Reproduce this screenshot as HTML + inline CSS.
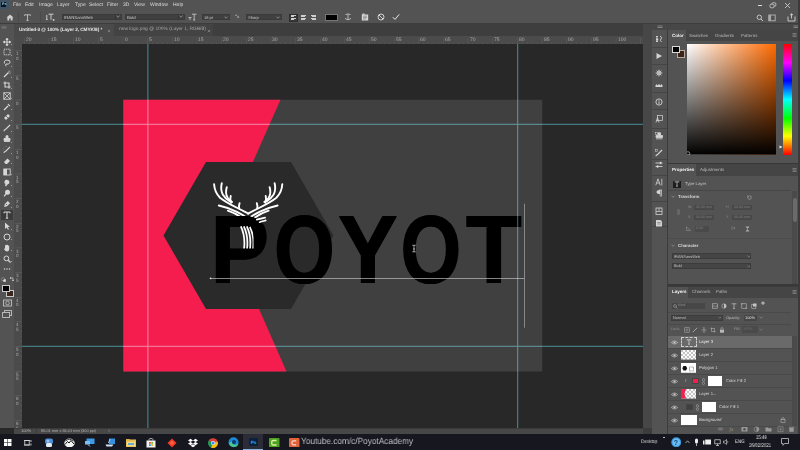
<!DOCTYPE html><html><head><meta charset="utf-8"><style>
*{margin:0;padding:0;box-sizing:border-box}
html,body{width:800px;height:450px;overflow:hidden;background:#282828;font-family:"Liberation Sans",sans-serif;text-rendering:geometricPrecision}
.a{position:absolute}
.t{position:absolute;color:#d0d0d0;white-space:nowrap;line-height:1;will-change:transform}
</style></head><body>
<div class="a" style="left:0px;top:0px;width:800px;height:10px;background:#535353;"></div>
<div class="a" style="left:0px;top:9.5px;width:800px;height:0.8px;background:#474747;"></div>
<div class="a" style="left:0px;top:10px;width:800px;height:14px;background:#535353;"></div>
<div class="a" style="left:0px;top:23.2px;width:800px;height:0.8px;background:#3d3d3d;"></div>
<div class="a" style="left:0px;top:24px;width:14px;height:404px;background:#535353;"></div>
<div class="a" style="left:13.6px;top:24px;width:1px;height:410px;background:#3c3c3c;"></div>
<div class="a" style="left:14px;top:24px;width:629px;height:12px;background:#3e3e3e;"></div>
<div class="a" style="left:14px;top:24px;width:100px;height:12px;background:#4a4a4a;"></div>
<div class="a" style="left:114px;top:24px;width:99px;height:12px;background:#434343;"></div>
<div class="a" style="left:14px;top:36px;width:629px;height:8px;background:#4b4b4b;"></div>
<div class="a" style="left:14px;top:36px;width:8px;height:392px;background:#4b4b4b;"></div>
<div class="a" style="left:0px;top:0px;width:8.5px;height:9px;background:#3f5566;"></div>
<div class="a" style="left:1px;top:2px;width:5.2px;height:5.2px;background:#08141f;"></div>
<div class="t" style="left:1.6px;top:2.8px;font-size:3.6px;color:#9fd4f5;font-weight:bold">Ps</div>
<div class="t" style="left:12.5px;top:2.9px;font-size:5.0px;color:#dedede;">File</div>
<div class="t" style="left:25px;top:2.9px;font-size:5.0px;color:#dedede;">Edit</div>
<div class="t" style="left:38.7px;top:2.9px;font-size:5.0px;color:#dedede;">Image</div>
<div class="t" style="left:57px;top:2.9px;font-size:5.0px;color:#dedede;">Layer</div>
<div class="t" style="left:74.5px;top:2.9px;font-size:5.0px;color:#dedede;">Type</div>
<div class="t" style="left:88.7px;top:2.9px;font-size:5.0px;color:#dedede;">Select</div>
<div class="t" style="left:107px;top:2.9px;font-size:5.0px;color:#dedede;">Filter</div>
<div class="t" style="left:123px;top:2.9px;font-size:5.0px;color:#dedede;">3D</div>
<div class="t" style="left:133.7px;top:2.9px;font-size:5.0px;color:#dedede;">View</div>
<div class="t" style="left:149.5px;top:2.9px;font-size:5.0px;color:#dedede;">Window</div>
<div class="t" style="left:172.5px;top:2.9px;font-size:5.0px;color:#dedede;">Help</div>
<div class="a" style="left:17.5px;top:12px;width:0.6px;height:10px;background:#4a4a4a;"></div>
<div class="a" style="left:40px;top:12px;width:0.6px;height:10px;background:#4a4a4a;"></div>
<svg class="a" style="left:6px;top:13.5px" width="8" height="7" viewBox="0 0 8 7"><path d="M0.5 3.6 L4 0.5 L7.5 3.6 L6.6 3.6 L6.6 6.6 L4.8 6.6 L4.8 4.6 L3.2 4.6 L3.2 6.6 L1.4 6.6 L1.4 3.6 Z" fill="#cfcfcf"/></svg>
<svg class="a" style="left:24px;top:13.5px" width="7" height="7" viewBox="0 0 7 7"><path d="M0.6 0.8 H6.4 M3.5 0.8 V6.4 M2.4 6.4 H4.6 M0.6 0.8 V1.8 M6.4 0.8 V1.8" stroke="#cfcfcf" stroke-width="0.8" fill="none"/></svg>
<svg class="a" style="left:45.5px;top:13px" width="9" height="8" viewBox="0 0 9 8"><path d="M2.5 1.2 H7.5 M5 1.2 V6.8 M0.8 2 V6.8 M0 6 L0.8 6.8 L1.6 6" stroke="#d8d8d8" stroke-width="0.9" fill="none"/><circle cx="7.6" cy="6.9" r="0.9" fill="#d8d8d8"/></svg>
<div class="a" style="left:61.6px;top:13.9px;width:60.8px;height:6.2px;background:#404040;border:0.5px solid #3a3a3a"></div>
<div class="t" style="left:63.6px;top:15.6px;font-size:4.3px;color:#c8c8c8;">IRANSansWeb</div>
<svg class="a" style="left:116.4px;top:15.4px" width="4" height="3" viewBox="0 0 4 3"><path d="M0.5 0.8 L2 2.2 L3.5 0.8" stroke="#bbb" stroke-width="0.6" fill="none"/></svg>
<div class="a" style="left:114.5px;top:14.2px;width:0.5px;height:5.6px;background:#353535;"></div>
<div class="a" style="left:125px;top:13.9px;width:59.5px;height:6.2px;background:#404040;border:0.5px solid #3a3a3a"></div>
<div class="t" style="left:127px;top:15.6px;font-size:4.3px;color:#c8c8c8;">Bold</div>
<svg class="a" style="left:178.5px;top:15.4px" width="4" height="3" viewBox="0 0 4 3"><path d="M0.5 0.8 L2 2.2 L3.5 0.8" stroke="#bbb" stroke-width="0.6" fill="none"/></svg>
<div class="a" style="left:177.5px;top:14.2px;width:0.5px;height:5.6px;background:#353535;"></div>
<svg class="a" style="left:188px;top:13px" width="9" height="8" viewBox="0 0 9 8"><path d="M4 1.2 H8.5 M6.2 1.2 V7 M5.2 7 H7.2 M0.5 4.5 H3.5 M2 4.5 V7" stroke="#d0d0d0" stroke-width="0.8" fill="none"/></svg>
<div class="a" style="left:201.6px;top:14.2px;width:28.7px;height:6.2px;background:#404040;border:0.5px solid #3a3a3a"></div>
<div class="t" style="left:203.6px;top:15.899999999999999px;font-size:4.0px;color:#c8c8c8;">18 pt</div>
<svg class="a" style="left:224.29999999999998px;top:15.7px" width="4" height="3" viewBox="0 0 4 3"><path d="M0.5 0.8 L2 2.2 L3.5 0.8" stroke="#bbb" stroke-width="0.6" fill="none"/></svg>
<div class="t" style="left:235px;top:14.4px;font-size:4.2px;color:#b8b8b8;"><sup>a</sup>a</div>
<div class="a" style="left:246px;top:14.2px;width:36px;height:6.2px;background:#404040;border:0.5px solid #3a3a3a"></div>
<div class="t" style="left:248px;top:15.899999999999999px;font-size:4.0px;color:#c8c8c8;">Sharp</div>
<svg class="a" style="left:276px;top:15.7px" width="4" height="3" viewBox="0 0 4 3"><path d="M0.5 0.8 L2 2.2 L3.5 0.8" stroke="#bbb" stroke-width="0.6" fill="none"/></svg>
<div class="a" style="left:288.5px;top:13.5px;width:9px;height:8px;background:#3a3a3a;border:0.5px solid #2e2e2e"></div>
<div class="a" style="left:290.5px;top:15.0px;width:5px;height:0.7px;background:#cfcfcf;"></div>
<div class="a" style="left:290.5px;top:16.35px;width:3.5px;height:0.7px;background:#cfcfcf;"></div>
<div class="a" style="left:290.5px;top:17.7px;width:5px;height:0.7px;background:#cfcfcf;"></div>
<div class="a" style="left:290.5px;top:19.05px;width:3.5px;height:0.7px;background:#cfcfcf;"></div>
<div class="a" style="left:300.5px;top:15.0px;width:5px;height:0.7px;background:#cfcfcf;"></div>
<div class="a" style="left:301.25px;top:16.35px;width:3.5px;height:0.7px;background:#cfcfcf;"></div>
<div class="a" style="left:300.5px;top:17.7px;width:5px;height:0.7px;background:#cfcfcf;"></div>
<div class="a" style="left:301.25px;top:19.05px;width:3.5px;height:0.7px;background:#cfcfcf;"></div>
<div class="a" style="left:310.5px;top:15.0px;width:5px;height:0.7px;background:#cfcfcf;"></div>
<div class="a" style="left:312.0px;top:16.35px;width:3.5px;height:0.7px;background:#cfcfcf;"></div>
<div class="a" style="left:310.5px;top:17.7px;width:5px;height:0.7px;background:#cfcfcf;"></div>
<div class="a" style="left:312.0px;top:19.05px;width:3.5px;height:0.7px;background:#cfcfcf;"></div>
<div class="a" style="left:325px;top:13.8px;width:12.5px;height:7.2px;background:#000;border:0.6px solid #777"></div>
<svg class="a" style="left:344px;top:13px" width="8" height="8" viewBox="0 0 8 8"><path d="M1.5 1.5 Q4 0.5 6.5 1.5 M4 1.3 V6.8 M1 5.5 Q4 8 7 5.5" stroke="#d0d0d0" stroke-width="0.8" fill="none"/></svg>
<svg class="a" style="left:361px;top:13px" width="8" height="8" viewBox="0 0 8 8"><rect x="0.8" y="1.5" width="6.4" height="6" fill="#d8d8d8"/><rect x="1.5" y="0.5" width="2" height="1.5" fill="#d8d8d8"/><path d="M2 3.2 H6 M2 4.6 H6 M2 6 H5" stroke="#555" stroke-width="0.5"/></svg>
<svg class="a" style="left:377px;top:13px" width="8" height="8" viewBox="0 0 8 8"><circle cx="4" cy="4" r="3" stroke="#e0e0e0" stroke-width="0.9" fill="none"/><path d="M2 2 L6 6" stroke="#e0e0e0" stroke-width="0.9"/></svg>
<svg class="a" style="left:392px;top:13px" width="8" height="8" viewBox="0 0 8 8"><path d="M0.8 4.2 L3 6.4 L7.2 1.4" stroke="#e8e8e8" stroke-width="1" fill="none"/></svg>
<svg class="a" style="left:755.5px;top:13.5px" width="8" height="8" viewBox="0 0 8 8"><circle cx="3.3" cy="3.3" r="2.2" stroke="#cfcfcf" stroke-width="0.9" fill="none"/><path d="M5 5 L7 7" stroke="#cfcfcf" stroke-width="1"/></svg>
<svg class="a" style="left:768px;top:13.5px" width="8" height="8" viewBox="0 0 8 8"><rect x="0.8" y="1" width="6.4" height="5.8" stroke="#c0c0c0" stroke-width="0.8" fill="none"/><rect x="0.8" y="1" width="2.2" height="5.8" fill="#aaa"/></svg>
<svg class="a" style="left:786.5px;top:13px" width="9" height="9" viewBox="0 0 9 9"><path d="M1 3.5 V8 H8 V3.5 M4.5 0.8 V5.5 M3 2.2 L4.5 0.8 L6 2.2" stroke="#cfcfcf" stroke-width="0.9" fill="none"/></svg>
<div class="a" style="left:757.5px;top:4.8px;width:4.8px;height:0.9px;background:#d8d8d8;"></div>
<svg class="a" style="left:768.5px;top:2px" width="8" height="7" viewBox="0 0 8 7"><rect x="1" y="2.2" width="4" height="3.6" rx="1.2" stroke="#d0d0d0" stroke-width="0.8" fill="none"/><path d="M3 2.2 V1.5 Q3 0.8 3.8 0.8 H6 Q6.8 0.8 6.8 1.6 V3.4 Q6.8 4.2 6 4.2 H5" stroke="#d0d0d0" stroke-width="0.8" fill="none"/></svg>
<svg class="a" style="left:783.5px;top:1.5px" width="7" height="7" viewBox="0 0 7 7"><path d="M1 1 L6 6 M6 1 L1 6" stroke="#d8d8d8" stroke-width="0.8"/></svg>
<div class="t" style="left:19px;top:28.2px;font-size:4.7px;color:#e8e8e8;font-weight:bold;letter-spacing:-0.05px">Untitled-3 @ 100% (Layer 2, CMYK/8) *</div>
<svg class="a" style="left:106.5px;top:29px" width="4" height="4" viewBox="0 0 4 4"><path d="M0.8 0.8 L3.2 3.2 M3.2 0.8 L0.8 3.2" stroke="#999" stroke-width="0.6"/></svg>
<div class="t" style="left:119px;top:28.2px;font-size:4.85px;color:#a8a8a8;">new logo.png @ 100% (Layer 1, RGB/8)</div>
<svg class="a" style="left:207px;top:29px" width="4" height="4" viewBox="0 0 4 4"><path d="M0.8 0.8 L3.2 3.2 M3.2 0.8 L0.8 3.2" stroke="#999" stroke-width="0.6"/></svg>
<svg class="a" style="left:0;top:0" width="800" height="450"><rect x="24.15" y="38" width="0.5" height="6" fill="#5e5e5e"/><rect x="29.08" y="42.5" width="0.5" height="1.5" fill="#606060"/><rect x="34.01" y="42.5" width="0.5" height="1.5" fill="#606060"/><rect x="38.94" y="42.5" width="0.5" height="1.5" fill="#606060"/><rect x="43.87" y="42.5" width="0.5" height="1.5" fill="#606060"/><rect x="48.80" y="38" width="0.5" height="6" fill="#5e5e5e"/><rect x="53.73" y="42.5" width="0.5" height="1.5" fill="#606060"/><rect x="58.66" y="42.5" width="0.5" height="1.5" fill="#606060"/><rect x="63.59" y="42.5" width="0.5" height="1.5" fill="#606060"/><rect x="68.52" y="42.5" width="0.5" height="1.5" fill="#606060"/><rect x="73.45" y="38" width="0.5" height="6" fill="#5e5e5e"/><rect x="78.38" y="42.5" width="0.5" height="1.5" fill="#606060"/><rect x="83.31" y="42.5" width="0.5" height="1.5" fill="#606060"/><rect x="88.24" y="42.5" width="0.5" height="1.5" fill="#606060"/><rect x="93.17" y="42.5" width="0.5" height="1.5" fill="#606060"/><rect x="98.10" y="38" width="0.5" height="6" fill="#5e5e5e"/><rect x="103.03" y="42.5" width="0.5" height="1.5" fill="#606060"/><rect x="107.96" y="42.5" width="0.5" height="1.5" fill="#606060"/><rect x="112.89" y="42.5" width="0.5" height="1.5" fill="#606060"/><rect x="117.82" y="42.5" width="0.5" height="1.5" fill="#606060"/><rect x="122.75" y="38" width="0.5" height="6" fill="#5e5e5e"/><rect x="127.68" y="42.5" width="0.5" height="1.5" fill="#606060"/><rect x="132.61" y="42.5" width="0.5" height="1.5" fill="#606060"/><rect x="137.54" y="42.5" width="0.5" height="1.5" fill="#606060"/><rect x="142.47" y="42.5" width="0.5" height="1.5" fill="#606060"/><rect x="147.40" y="38" width="0.5" height="6" fill="#5e5e5e"/><rect x="152.33" y="42.5" width="0.5" height="1.5" fill="#606060"/><rect x="157.26" y="42.5" width="0.5" height="1.5" fill="#606060"/><rect x="162.19" y="42.5" width="0.5" height="1.5" fill="#606060"/><rect x="167.12" y="42.5" width="0.5" height="1.5" fill="#606060"/><rect x="172.05" y="38" width="0.5" height="6" fill="#5e5e5e"/><rect x="176.98" y="42.5" width="0.5" height="1.5" fill="#606060"/><rect x="181.91" y="42.5" width="0.5" height="1.5" fill="#606060"/><rect x="186.84" y="42.5" width="0.5" height="1.5" fill="#606060"/><rect x="191.77" y="42.5" width="0.5" height="1.5" fill="#606060"/><rect x="196.70" y="38" width="0.5" height="6" fill="#5e5e5e"/><rect x="201.63" y="42.5" width="0.5" height="1.5" fill="#606060"/><rect x="206.56" y="42.5" width="0.5" height="1.5" fill="#606060"/><rect x="211.49" y="42.5" width="0.5" height="1.5" fill="#606060"/><rect x="216.42" y="42.5" width="0.5" height="1.5" fill="#606060"/><rect x="221.35" y="38" width="0.5" height="6" fill="#5e5e5e"/><rect x="226.28" y="42.5" width="0.5" height="1.5" fill="#606060"/><rect x="231.21" y="42.5" width="0.5" height="1.5" fill="#606060"/><rect x="236.14" y="42.5" width="0.5" height="1.5" fill="#606060"/><rect x="241.07" y="42.5" width="0.5" height="1.5" fill="#606060"/><rect x="246.00" y="38" width="0.5" height="6" fill="#5e5e5e"/><rect x="250.93" y="42.5" width="0.5" height="1.5" fill="#606060"/><rect x="255.86" y="42.5" width="0.5" height="1.5" fill="#606060"/><rect x="260.79" y="42.5" width="0.5" height="1.5" fill="#606060"/><rect x="265.72" y="42.5" width="0.5" height="1.5" fill="#606060"/><rect x="270.65" y="38" width="0.5" height="6" fill="#5e5e5e"/><rect x="275.58" y="42.5" width="0.5" height="1.5" fill="#606060"/><rect x="280.51" y="42.5" width="0.5" height="1.5" fill="#606060"/><rect x="285.44" y="42.5" width="0.5" height="1.5" fill="#606060"/><rect x="290.37" y="42.5" width="0.5" height="1.5" fill="#606060"/><rect x="295.30" y="38" width="0.5" height="6" fill="#5e5e5e"/><rect x="300.23" y="42.5" width="0.5" height="1.5" fill="#606060"/><rect x="305.16" y="42.5" width="0.5" height="1.5" fill="#606060"/><rect x="310.09" y="42.5" width="0.5" height="1.5" fill="#606060"/><rect x="315.02" y="42.5" width="0.5" height="1.5" fill="#606060"/><rect x="319.95" y="38" width="0.5" height="6" fill="#5e5e5e"/><rect x="324.88" y="42.5" width="0.5" height="1.5" fill="#606060"/><rect x="329.81" y="42.5" width="0.5" height="1.5" fill="#606060"/><rect x="334.74" y="42.5" width="0.5" height="1.5" fill="#606060"/><rect x="339.67" y="42.5" width="0.5" height="1.5" fill="#606060"/><rect x="344.60" y="38" width="0.5" height="6" fill="#5e5e5e"/><rect x="349.53" y="42.5" width="0.5" height="1.5" fill="#606060"/><rect x="354.46" y="42.5" width="0.5" height="1.5" fill="#606060"/><rect x="359.39" y="42.5" width="0.5" height="1.5" fill="#606060"/><rect x="364.32" y="42.5" width="0.5" height="1.5" fill="#606060"/><rect x="369.25" y="38" width="0.5" height="6" fill="#5e5e5e"/><rect x="374.18" y="42.5" width="0.5" height="1.5" fill="#606060"/><rect x="379.11" y="42.5" width="0.5" height="1.5" fill="#606060"/><rect x="384.04" y="42.5" width="0.5" height="1.5" fill="#606060"/><rect x="388.97" y="42.5" width="0.5" height="1.5" fill="#606060"/><rect x="393.90" y="38" width="0.5" height="6" fill="#5e5e5e"/><rect x="398.83" y="42.5" width="0.5" height="1.5" fill="#606060"/><rect x="403.76" y="42.5" width="0.5" height="1.5" fill="#606060"/><rect x="408.69" y="42.5" width="0.5" height="1.5" fill="#606060"/><rect x="413.62" y="42.5" width="0.5" height="1.5" fill="#606060"/><rect x="418.55" y="38" width="0.5" height="6" fill="#5e5e5e"/><rect x="423.48" y="42.5" width="0.5" height="1.5" fill="#606060"/><rect x="428.41" y="42.5" width="0.5" height="1.5" fill="#606060"/><rect x="433.34" y="42.5" width="0.5" height="1.5" fill="#606060"/><rect x="438.27" y="42.5" width="0.5" height="1.5" fill="#606060"/><rect x="443.20" y="38" width="0.5" height="6" fill="#5e5e5e"/><rect x="448.13" y="42.5" width="0.5" height="1.5" fill="#606060"/><rect x="453.06" y="42.5" width="0.5" height="1.5" fill="#606060"/><rect x="457.99" y="42.5" width="0.5" height="1.5" fill="#606060"/><rect x="462.92" y="42.5" width="0.5" height="1.5" fill="#606060"/><rect x="467.85" y="38" width="0.5" height="6" fill="#5e5e5e"/><rect x="472.78" y="42.5" width="0.5" height="1.5" fill="#606060"/><rect x="477.71" y="42.5" width="0.5" height="1.5" fill="#606060"/><rect x="482.64" y="42.5" width="0.5" height="1.5" fill="#606060"/><rect x="487.57" y="42.5" width="0.5" height="1.5" fill="#606060"/><rect x="492.50" y="38" width="0.5" height="6" fill="#5e5e5e"/><rect x="497.43" y="42.5" width="0.5" height="1.5" fill="#606060"/><rect x="502.36" y="42.5" width="0.5" height="1.5" fill="#606060"/><rect x="507.29" y="42.5" width="0.5" height="1.5" fill="#606060"/><rect x="512.22" y="42.5" width="0.5" height="1.5" fill="#606060"/><rect x="517.15" y="38" width="0.5" height="6" fill="#5e5e5e"/><rect x="522.08" y="42.5" width="0.5" height="1.5" fill="#606060"/><rect x="527.01" y="42.5" width="0.5" height="1.5" fill="#606060"/><rect x="531.94" y="42.5" width="0.5" height="1.5" fill="#606060"/><rect x="536.87" y="42.5" width="0.5" height="1.5" fill="#606060"/><rect x="541.80" y="38" width="0.5" height="6" fill="#5e5e5e"/><rect x="546.73" y="42.5" width="0.5" height="1.5" fill="#606060"/><rect x="551.66" y="42.5" width="0.5" height="1.5" fill="#606060"/><rect x="556.59" y="42.5" width="0.5" height="1.5" fill="#606060"/><rect x="561.52" y="42.5" width="0.5" height="1.5" fill="#606060"/><rect x="566.45" y="38" width="0.5" height="6" fill="#5e5e5e"/><rect x="571.38" y="42.5" width="0.5" height="1.5" fill="#606060"/><rect x="576.31" y="42.5" width="0.5" height="1.5" fill="#606060"/><rect x="581.24" y="42.5" width="0.5" height="1.5" fill="#606060"/><rect x="586.17" y="42.5" width="0.5" height="1.5" fill="#606060"/><rect x="591.10" y="38" width="0.5" height="6" fill="#5e5e5e"/><rect x="596.03" y="42.5" width="0.5" height="1.5" fill="#606060"/><rect x="600.96" y="42.5" width="0.5" height="1.5" fill="#606060"/><rect x="605.89" y="42.5" width="0.5" height="1.5" fill="#606060"/><rect x="610.82" y="42.5" width="0.5" height="1.5" fill="#606060"/><rect x="615.75" y="38" width="0.5" height="6" fill="#5e5e5e"/><rect x="620.68" y="42.5" width="0.5" height="1.5" fill="#606060"/><rect x="625.61" y="42.5" width="0.5" height="1.5" fill="#606060"/><rect x="630.54" y="42.5" width="0.5" height="1.5" fill="#606060"/><rect x="635.47" y="42.5" width="0.5" height="1.5" fill="#606060"/><rect x="640.40" y="38" width="0.5" height="6" fill="#5e5e5e"/></svg>
<div class="t" style="left:25.900000000000006px;top:38.2px;font-size:5.0px;color:#aaaaaa;">20</div>
<div class="t" style="left:50.55000000000001px;top:38.2px;font-size:5.0px;color:#aaaaaa;">15</div>
<div class="t" style="left:75.2px;top:38.2px;font-size:5.0px;color:#aaaaaa;">10</div>
<div class="t" style="left:99.85px;top:38.2px;font-size:5.0px;color:#aaaaaa;">5</div>
<div class="t" style="left:124.5px;top:38.2px;font-size:5.0px;color:#aaaaaa;">0</div>
<div class="t" style="left:149.15px;top:38.2px;font-size:5.0px;color:#aaaaaa;">5</div>
<div class="t" style="left:173.8px;top:38.2px;font-size:5.0px;color:#aaaaaa;">10</div>
<div class="t" style="left:198.45px;top:38.2px;font-size:5.0px;color:#aaaaaa;">15</div>
<div class="t" style="left:223.1px;top:38.2px;font-size:5.0px;color:#aaaaaa;">20</div>
<div class="t" style="left:247.75px;top:38.2px;font-size:5.0px;color:#aaaaaa;">25</div>
<div class="t" style="left:272.4px;top:38.2px;font-size:5.0px;color:#aaaaaa;">30</div>
<div class="t" style="left:297.04999999999995px;top:38.2px;font-size:5.0px;color:#aaaaaa;">35</div>
<div class="t" style="left:321.7px;top:38.2px;font-size:5.0px;color:#aaaaaa;">40</div>
<div class="t" style="left:346.35px;top:38.2px;font-size:5.0px;color:#aaaaaa;">45</div>
<div class="t" style="left:371.0px;top:38.2px;font-size:5.0px;color:#aaaaaa;">50</div>
<div class="t" style="left:395.65px;top:38.2px;font-size:5.0px;color:#aaaaaa;">55</div>
<div class="t" style="left:420.29999999999995px;top:38.2px;font-size:5.0px;color:#aaaaaa;">60</div>
<div class="t" style="left:444.95px;top:38.2px;font-size:5.0px;color:#aaaaaa;">65</div>
<div class="t" style="left:469.59999999999997px;top:38.2px;font-size:5.0px;color:#aaaaaa;">70</div>
<div class="t" style="left:494.25px;top:38.2px;font-size:5.0px;color:#aaaaaa;">75</div>
<div class="t" style="left:518.9px;top:38.2px;font-size:5.0px;color:#aaaaaa;">80</div>
<div class="t" style="left:543.55px;top:38.2px;font-size:5.0px;color:#aaaaaa;">85</div>
<div class="t" style="left:568.2px;top:38.2px;font-size:5.0px;color:#aaaaaa;">90</div>
<div class="t" style="left:592.8499999999999px;top:38.2px;font-size:5.0px;color:#aaaaaa;">95</div>
<div class="t" style="left:617.5px;top:38.2px;font-size:5.0px;color:#aaaaaa;">100</div>
<svg class="a" style="left:0;top:0" width="800" height="450"><rect x="20.5" y="45.52" width="1.5" height="0.5" fill="#606060"/><rect x="15" y="50.45" width="7" height="0.5" fill="#666"/><rect x="20.5" y="55.38" width="1.5" height="0.5" fill="#606060"/><rect x="20.5" y="60.31" width="1.5" height="0.5" fill="#606060"/><rect x="20.5" y="65.24" width="1.5" height="0.5" fill="#606060"/><rect x="20.5" y="70.17" width="1.5" height="0.5" fill="#606060"/><rect x="15" y="75.10" width="7" height="0.5" fill="#666"/><rect x="20.5" y="80.03" width="1.5" height="0.5" fill="#606060"/><rect x="20.5" y="84.96" width="1.5" height="0.5" fill="#606060"/><rect x="20.5" y="89.89" width="1.5" height="0.5" fill="#606060"/><rect x="20.5" y="94.82" width="1.5" height="0.5" fill="#606060"/><rect x="15" y="99.75" width="7" height="0.5" fill="#666"/><rect x="20.5" y="104.68" width="1.5" height="0.5" fill="#606060"/><rect x="20.5" y="109.61" width="1.5" height="0.5" fill="#606060"/><rect x="20.5" y="114.54" width="1.5" height="0.5" fill="#606060"/><rect x="20.5" y="119.47" width="1.5" height="0.5" fill="#606060"/><rect x="15" y="124.40" width="7" height="0.5" fill="#666"/><rect x="20.5" y="129.33" width="1.5" height="0.5" fill="#606060"/><rect x="20.5" y="134.26" width="1.5" height="0.5" fill="#606060"/><rect x="20.5" y="139.19" width="1.5" height="0.5" fill="#606060"/><rect x="20.5" y="144.12" width="1.5" height="0.5" fill="#606060"/><rect x="15" y="149.05" width="7" height="0.5" fill="#666"/><rect x="20.5" y="153.98" width="1.5" height="0.5" fill="#606060"/><rect x="20.5" y="158.91" width="1.5" height="0.5" fill="#606060"/><rect x="20.5" y="163.84" width="1.5" height="0.5" fill="#606060"/><rect x="20.5" y="168.77" width="1.5" height="0.5" fill="#606060"/><rect x="15" y="173.70" width="7" height="0.5" fill="#666"/><rect x="20.5" y="178.63" width="1.5" height="0.5" fill="#606060"/><rect x="20.5" y="183.56" width="1.5" height="0.5" fill="#606060"/><rect x="20.5" y="188.49" width="1.5" height="0.5" fill="#606060"/><rect x="20.5" y="193.42" width="1.5" height="0.5" fill="#606060"/><rect x="15" y="198.35" width="7" height="0.5" fill="#666"/><rect x="20.5" y="203.28" width="1.5" height="0.5" fill="#606060"/><rect x="20.5" y="208.21" width="1.5" height="0.5" fill="#606060"/><rect x="20.5" y="213.14" width="1.5" height="0.5" fill="#606060"/><rect x="20.5" y="218.07" width="1.5" height="0.5" fill="#606060"/><rect x="15" y="223.00" width="7" height="0.5" fill="#666"/><rect x="20.5" y="227.93" width="1.5" height="0.5" fill="#606060"/><rect x="20.5" y="232.86" width="1.5" height="0.5" fill="#606060"/><rect x="20.5" y="237.79" width="1.5" height="0.5" fill="#606060"/><rect x="20.5" y="242.72" width="1.5" height="0.5" fill="#606060"/><rect x="15" y="247.65" width="7" height="0.5" fill="#666"/><rect x="20.5" y="252.58" width="1.5" height="0.5" fill="#606060"/><rect x="20.5" y="257.51" width="1.5" height="0.5" fill="#606060"/><rect x="20.5" y="262.44" width="1.5" height="0.5" fill="#606060"/><rect x="20.5" y="267.37" width="1.5" height="0.5" fill="#606060"/><rect x="15" y="272.30" width="7" height="0.5" fill="#666"/><rect x="20.5" y="277.23" width="1.5" height="0.5" fill="#606060"/><rect x="20.5" y="282.16" width="1.5" height="0.5" fill="#606060"/><rect x="20.5" y="287.09" width="1.5" height="0.5" fill="#606060"/><rect x="20.5" y="292.02" width="1.5" height="0.5" fill="#606060"/><rect x="15" y="296.95" width="7" height="0.5" fill="#666"/><rect x="20.5" y="301.88" width="1.5" height="0.5" fill="#606060"/><rect x="20.5" y="306.81" width="1.5" height="0.5" fill="#606060"/><rect x="20.5" y="311.74" width="1.5" height="0.5" fill="#606060"/><rect x="20.5" y="316.67" width="1.5" height="0.5" fill="#606060"/><rect x="15" y="321.60" width="7" height="0.5" fill="#666"/><rect x="20.5" y="326.53" width="1.5" height="0.5" fill="#606060"/><rect x="20.5" y="331.46" width="1.5" height="0.5" fill="#606060"/><rect x="20.5" y="336.39" width="1.5" height="0.5" fill="#606060"/><rect x="20.5" y="341.32" width="1.5" height="0.5" fill="#606060"/><rect x="15" y="346.25" width="7" height="0.5" fill="#666"/><rect x="20.5" y="351.18" width="1.5" height="0.5" fill="#606060"/><rect x="20.5" y="356.11" width="1.5" height="0.5" fill="#606060"/><rect x="20.5" y="361.04" width="1.5" height="0.5" fill="#606060"/><rect x="20.5" y="365.97" width="1.5" height="0.5" fill="#606060"/><rect x="15" y="370.90" width="7" height="0.5" fill="#666"/><rect x="20.5" y="375.83" width="1.5" height="0.5" fill="#606060"/><rect x="20.5" y="380.76" width="1.5" height="0.5" fill="#606060"/><rect x="20.5" y="385.69" width="1.5" height="0.5" fill="#606060"/><rect x="20.5" y="390.62" width="1.5" height="0.5" fill="#606060"/><rect x="15" y="395.55" width="7" height="0.5" fill="#666"/><rect x="20.5" y="400.48" width="1.5" height="0.5" fill="#606060"/><rect x="20.5" y="405.41" width="1.5" height="0.5" fill="#606060"/><rect x="20.5" y="410.34" width="1.5" height="0.5" fill="#606060"/><rect x="20.5" y="415.27" width="1.5" height="0.5" fill="#606060"/><rect x="15" y="420.20" width="7" height="0.5" fill="#666"/><rect x="20.5" y="425.13" width="1.5" height="0.5" fill="#606060"/></svg>
<div class="t" style="left:15.8px;top:52.300000000000004px;font-size:4.6px;color:#aaaaaa;">1</div>
<div class="t" style="left:15.8px;top:56.900000000000006px;font-size:4.6px;color:#aaaaaa;">0</div>
<div class="t" style="left:15.8px;top:76.94999999999999px;font-size:4.6px;color:#aaaaaa;">5</div>
<div class="t" style="left:15.8px;top:101.6px;font-size:4.6px;color:#aaaaaa;">0</div>
<div class="t" style="left:15.8px;top:126.25px;font-size:4.6px;color:#aaaaaa;">5</div>
<div class="t" style="left:15.8px;top:150.9px;font-size:4.6px;color:#aaaaaa;">1</div>
<div class="t" style="left:15.8px;top:155.5px;font-size:4.6px;color:#aaaaaa;">0</div>
<div class="t" style="left:15.8px;top:175.54999999999998px;font-size:4.6px;color:#aaaaaa;">1</div>
<div class="t" style="left:15.8px;top:180.14999999999998px;font-size:4.6px;color:#aaaaaa;">5</div>
<div class="t" style="left:15.8px;top:200.2px;font-size:4.6px;color:#aaaaaa;">2</div>
<div class="t" style="left:15.8px;top:204.79999999999998px;font-size:4.6px;color:#aaaaaa;">0</div>
<div class="t" style="left:15.8px;top:224.85px;font-size:4.6px;color:#aaaaaa;">2</div>
<div class="t" style="left:15.8px;top:229.45px;font-size:4.6px;color:#aaaaaa;">5</div>
<div class="t" style="left:15.8px;top:249.49999999999997px;font-size:4.6px;color:#aaaaaa;">3</div>
<div class="t" style="left:15.8px;top:254.09999999999997px;font-size:4.6px;color:#aaaaaa;">0</div>
<div class="t" style="left:15.8px;top:274.15px;font-size:4.6px;color:#aaaaaa;">3</div>
<div class="t" style="left:15.8px;top:278.75px;font-size:4.6px;color:#aaaaaa;">5</div>
<div class="t" style="left:15.8px;top:298.8px;font-size:4.6px;color:#aaaaaa;">4</div>
<div class="t" style="left:15.8px;top:303.40000000000003px;font-size:4.6px;color:#aaaaaa;">0</div>
<div class="t" style="left:15.8px;top:323.45000000000005px;font-size:4.6px;color:#aaaaaa;">4</div>
<div class="t" style="left:15.8px;top:328.05000000000007px;font-size:4.6px;color:#aaaaaa;">5</div>
<div class="t" style="left:15.8px;top:348.1px;font-size:4.6px;color:#aaaaaa;">5</div>
<div class="t" style="left:15.8px;top:352.70000000000005px;font-size:4.6px;color:#aaaaaa;">0</div>
<div class="t" style="left:15.8px;top:372.75px;font-size:4.6px;color:#aaaaaa;">5</div>
<div class="t" style="left:15.8px;top:377.35px;font-size:4.6px;color:#aaaaaa;">5</div>
<div class="t" style="left:15.8px;top:397.4px;font-size:4.6px;color:#aaaaaa;">6</div>
<div class="t" style="left:15.8px;top:402.0px;font-size:4.6px;color:#aaaaaa;">0</div>
<div class="t" style="left:15.8px;top:422.05px;font-size:4.6px;color:#aaaaaa;">6</div>
<div class="t" style="left:15.8px;top:426.65000000000003px;font-size:4.6px;color:#aaaaaa;">5</div>
<div class="a" style="left:0px;top:25.5px;width:14px;height:2.2px;background:#535353;"></div>
<svg class="a" style="left:1px;top:25.8px" width="6" height="3" viewBox="0 0 6 3"><path d="M0.5 0.8 H5.5 M0.5 2 H5.5" stroke="#999" stroke-width="0.5"/></svg>
<svg class="a" style="left:2.5px;top:37.50px" width="8" height="8" viewBox="0 0 8 8"><path d="M4 0.5 V7.5 M0.5 4 H7.5 M2.8 1.7 L4 0.5 L5.2 1.7 M2.8 6.3 L4 7.5 L5.2 6.3 M1.7 2.8 L0.5 4 L1.7 5.2 M6.3 2.8 L7.5 4 L6.3 5.2" stroke="#d6d6d6" stroke-width="1.1" fill="none"/></svg>
<div class="a" style="left:10.6px;top:44.1px;width:0.9px;height:0.9px;background:#9a9a9a;"></div>
<svg class="a" style="left:2.5px;top:48.35px" width="8" height="8" viewBox="0 0 8 8"><rect x="1" y="1.2" width="6" height="5.6" stroke="#d6d6d6" stroke-width="0.9" stroke-dasharray="1.3 0.8" fill="none"/></svg>
<div class="a" style="left:10.6px;top:54.95px;width:0.9px;height:0.9px;background:#9a9a9a;"></div>
<svg class="a" style="left:2.5px;top:59.20px" width="8" height="8" viewBox="0 0 8 8"><path d="M1.5 4.5 Q0.5 1.5 4 1 Q7.5 1 7 3.5 Q6 6 3 5 M3 5 Q2 6.5 3.2 7.3" stroke="#d6d6d6" stroke-width="1" fill="none"/></svg>
<div class="a" style="left:10.6px;top:65.8px;width:0.9px;height:0.9px;background:#9a9a9a;"></div>
<svg class="a" style="left:2.5px;top:70.05px" width="8" height="8" viewBox="0 0 8 8"><path d="M1 7 L5.5 2.5" stroke="#d6d6d6" stroke-width="1.3"/><path d="M6 0.5 V2 M7.5 2 H6.2 M6.5 3 L7.3 3.8" stroke="#d6d6d6" stroke-width="0.6"/></svg>
<div class="a" style="left:10.6px;top:76.64999999999999px;width:0.9px;height:0.9px;background:#9a9a9a;"></div>
<svg class="a" style="left:2.5px;top:80.90px" width="8" height="8" viewBox="0 0 8 8"><path d="M2 0.5 V6 H7.5 M0.5 2 H6 V7.5" stroke="#d6d6d6" stroke-width="1.1" fill="none"/></svg>
<div class="a" style="left:10.6px;top:87.5px;width:0.9px;height:0.9px;background:#9a9a9a;"></div>
<svg class="a" style="left:2.5px;top:91.75px" width="8" height="8" viewBox="0 0 8 8"><rect x="0.8" y="0.8" width="6.4" height="6.4" stroke="#d6d6d6" stroke-width="0.9" fill="none"/><path d="M0.8 0.8 L7.2 7.2 M7.2 0.8 L0.8 7.2" stroke="#d6d6d6" stroke-width="0.8"/></svg>
<div class="a" style="left:10.6px;top:98.35px;width:0.9px;height:0.9px;background:#9a9a9a;"></div>
<svg class="a" style="left:2.5px;top:102.60px" width="8" height="8" viewBox="0 0 8 8"><path d="M1 7 L5 3" stroke="#d6d6d6" stroke-width="1.2"/><path d="M4.5 1.5 L6.5 3.5 L7.3 2.7 L5.3 0.7 Z" fill="#d6d6d6"/></svg>
<div class="a" style="left:10.6px;top:109.19999999999999px;width:0.9px;height:0.9px;background:#9a9a9a;"></div>
<svg class="a" style="left:2.5px;top:113.45px" width="8" height="8" viewBox="0 0 8 8"><path d="M1 5 L5 1 L7 3 L3 7 Z" fill="#d6d6d6"/><path d="M3 3 L5 5" stroke="#535353" stroke-width="0.8"/></svg>
<div class="a" style="left:10.6px;top:120.05px;width:0.9px;height:0.9px;background:#9a9a9a;"></div>
<svg class="a" style="left:2.5px;top:124.30px" width="8" height="8" viewBox="0 0 8 8"><path d="M1 7.2 Q1 5.5 2.5 5.5 L7 1" stroke="#d6d6d6" stroke-width="1.2" fill="none"/></svg>
<div class="a" style="left:10.6px;top:130.9px;width:0.9px;height:0.9px;background:#9a9a9a;"></div>
<svg class="a" style="left:2.5px;top:135.15px" width="8" height="8" viewBox="0 0 8 8"><path d="M3 0.8 H5 V3.5 H7 V5.5 H1 V3.5 H3 Z M1 6.5 H7" stroke="#d6d6d6" stroke-width="0.9" fill="#d6d6d6"/></svg>
<div class="a" style="left:10.6px;top:141.74999999999997px;width:0.9px;height:0.9px;background:#9a9a9a;"></div>
<svg class="a" style="left:2.5px;top:146.00px" width="8" height="8" viewBox="0 0 8 8"><path d="M1 7 Q1 5.5 2.5 5.5 L7 1" stroke="#d6d6d6" stroke-width="1.1" fill="none"/><path d="M0.5 3 A2.2 2.2 0 1 1 3 0.6" stroke="#d6d6d6" stroke-width="0.7" fill="none"/></svg>
<div class="a" style="left:10.6px;top:152.6px;width:0.9px;height:0.9px;background:#9a9a9a;"></div>
<svg class="a" style="left:2.5px;top:156.85px" width="8" height="8" viewBox="0 0 8 8"><path d="M1 5 L4.5 1.5 L7 4 L4 7 H2.5 Z" fill="#d6d6d6"/></svg>
<div class="a" style="left:10.6px;top:163.45px;width:0.9px;height:0.9px;background:#9a9a9a;"></div>
<svg class="a" style="left:2.5px;top:167.70px" width="8" height="8" viewBox="0 0 8 8"><rect x="0.8" y="1" width="6.4" height="6" stroke="#d6d6d6" stroke-width="0.9" fill="none"/><rect x="0.8" y="1" width="3.2" height="6" fill="#d6d6d6"/></svg>
<div class="a" style="left:10.6px;top:174.29999999999998px;width:0.9px;height:0.9px;background:#9a9a9a;"></div>
<svg class="a" style="left:2.5px;top:178.55px" width="8" height="8" viewBox="0 0 8 8"><path d="M3 0.8 Q6 0.5 6.5 3 Q6.5 5 4.5 5.5 L3 7.5 L2 6.5 L2.5 5 Q0.8 4 1.5 2.5 Q2 1 3 0.8 Z" fill="#d6d6d6"/></svg>
<div class="a" style="left:10.6px;top:185.14999999999998px;width:0.9px;height:0.9px;background:#9a9a9a;"></div>
<svg class="a" style="left:2.5px;top:189.40px" width="8" height="8" viewBox="0 0 8 8"><circle cx="4.5" cy="3.2" r="2.5" fill="#d6d6d6"/><path d="M3 5 L1 7.3" stroke="#d6d6d6" stroke-width="1.2"/></svg>
<div class="a" style="left:10.6px;top:196.0px;width:0.9px;height:0.9px;background:#9a9a9a;"></div>
<svg class="a" style="left:2.5px;top:200.25px" width="8" height="8" viewBox="0 0 8 8"><path d="M1.2 7 L1.8 4 L4.8 1 L7 3.2 L4 6.2 Z" fill="#d6d6d6"/><circle cx="3.5" cy="4.5" r="0.6" fill="#535353"/></svg>
<div class="a" style="left:10.6px;top:206.85px;width:0.9px;height:0.9px;background:#9a9a9a;"></div>
<div class="a" style="left:1px;top:209.79999999999998px;width:12px;height:10.6px;background:#3b3b3b;"></div>
<svg class="a" style="left:2.5px;top:211.10px" width="8" height="8" viewBox="0 0 8 8"><path d="M1 1 H7 M4 1 V7.2 M2.8 7.2 H5.2 M1 1 V2.3 M7 1 V2.3" stroke="#d6d6d6" stroke-width="1.1" fill="none"/></svg>
<svg class="a" style="left:2.5px;top:221.95px" width="8" height="8" viewBox="0 0 8 8"><path d="M2 0.5 L2 7 L3.6 5.4 L5 7.8 L6 7.3 L4.8 5 L7 5 Z" fill="#d6d6d6"/></svg>
<div class="a" style="left:10.6px;top:228.54999999999998px;width:0.9px;height:0.9px;background:#9a9a9a;"></div>
<svg class="a" style="left:2.5px;top:232.80px" width="8" height="8" viewBox="0 0 8 8"><circle cx="4" cy="4" r="3" stroke="#d6d6d6" stroke-width="1" fill="none"/></svg>
<div class="a" style="left:10.6px;top:239.39999999999998px;width:0.9px;height:0.9px;background:#9a9a9a;"></div>
<svg class="a" style="left:2.5px;top:243.65px" width="8" height="8" viewBox="0 0 8 8"><path d="M2 4.5 V2 Q2 1.3 2.6 1.3 V3.5 V1 Q3.2 0.3 3.8 1 V3.3 V1 Q4.4 0.4 5 1 V3.5 V1.8 Q5.6 1.2 6.2 1.8 V5 Q6.2 7.5 4 7.5 Q2.5 7.5 1.2 5.5 Q0.8 4.8 1.5 4.5 Z" fill="#d6d6d6"/></svg>
<div class="a" style="left:10.6px;top:250.25px;width:0.9px;height:0.9px;background:#9a9a9a;"></div>
<svg class="a" style="left:2.5px;top:254.50px" width="8" height="8" viewBox="0 0 8 8"><circle cx="3.4" cy="3.4" r="2.4" stroke="#d6d6d6" stroke-width="1" fill="none"/><path d="M5.2 5.2 L7.5 7.5" stroke="#d6d6d6" stroke-width="1.3"/></svg>
<div class="a" style="left:10.6px;top:261.1px;width:0.9px;height:0.9px;background:#9a9a9a;"></div>
<svg class="a" style="left:2.5px;top:265.35px" width="8" height="8" viewBox="0 0 8 8"><circle cx="1.5" cy="4" r="0.75" fill="#d6d6d6"/><circle cx="4" cy="4" r="0.75" fill="#d6d6d6"/><circle cx="6.5" cy="4" r="0.75" fill="#d6d6d6"/></svg>
<svg class="a" style="left:0.5px;top:275.5px" width="14" height="7" viewBox="0 0 14 7"><rect x="1" y="2" width="2.5" height="2.5" fill="#222" stroke="#ccc" stroke-width="0.5"/><rect x="2.3" y="3.3" width="2.5" height="2.5" fill="#ddd"/><path d="M9 2 H12 V5 M11 4 L12 5 L13 4 M10 1 L9 2 L10 3" stroke="#cfcfcf" stroke-width="0.7" fill="none"/></svg>
<div class="a" style="left:5.5px;top:289.5px;width:8px;height:7.5px;background:#3b2620;border:0.7px solid #c8c8c8"></div>
<div class="a" style="left:1.5px;top:284.5px;width:8px;height:7.5px;background:#000;border:0.7px solid #c8c8c8"></div>
<svg class="a" style="left:2.5px;top:299px" width="9" height="8" viewBox="0 0 9 8"><rect x="0.6" y="1" width="7.8" height="6" stroke="#cfcfcf" stroke-width="0.8" fill="none"/><circle cx="4.5" cy="4" r="1.8" stroke="#cfcfcf" stroke-width="0.7" fill="none"/></svg>
<svg class="a" style="left:2px;top:310px" width="10" height="8" viewBox="0 0 10 8"><rect x="2.5" y="0.6" width="7" height="5" stroke="#cfcfcf" stroke-width="0.8" fill="none"/><rect x="0.6" y="2.5" width="7" height="5" fill="#535353" stroke="#cfcfcf" stroke-width="0.8"/></svg>
<svg class="a" style="left:0;top:0" width="800" height="450" viewBox="0 0 800 450">
<rect x="22" y="44" width="621" height="384" fill="#282828"/>
<rect x="123.3" y="99.8" width="418.9" height="271.7" fill="#404040"/>
<polygon points="123.3,99.8 280.5,99.8 223.5,228 286.5,371.5 123.3,371.5" fill="#f41d4e"/>
<polygon points="206,162 291,162 333.5,235.5 291,309 206,309 163.5,235.5" fill="#2a2a2a"/>
</svg>
<svg class="a" style="left:0;top:0" width="800" height="450" viewBox="0 0 800 450">
<defs><clipPath id="cnt"><rect x="232" y="226" width="21.5" height="22.5"/></clipPath>
<clipPath id="cv"><rect x="22" y="44" width="621" height="384"/></clipPath></defs>
<g fill="none" stroke="#ffffff" stroke-width="1.9" stroke-linecap="round"><path d="M 214.10 184.30 C 214.40 189.00 216.20 194.00 220.00 197.70 C 224.40 201.20 230.40 204.50 238.40 208.50 C 242.40 210.50 245.90 212.30 248.50 213.60" />
<path d="M 221.80 183.20 C 220.80 187.00 221.00 191.00 222.80 194.50 C 224.60 197.50 226.90 199.60 229.60 201.30" />
<path d="M 226.80 187.10 C 225.60 191.00 225.90 195.00 227.80 198.00 C 229.00 199.60 230.40 200.80 232.10 202.00" />
<path d="M 230.70 196.00 C 230.10 198.00 230.10 200.20 231.00 202.80" />
<path d="M 239.60 203.20 C 239.00 204.80 238.80 206.50 239.20 208.40" />
<path d="M 218.80 205.50 C 225.40 207.00 231.40 209.00 236.90 211.80 C 241.40 214.00 244.40 216.00 246.40 217.60" />
<path d="M 227.80 210.60 C 232.40 212.00 236.90 214.20 241.40 217.60" />
<path d="M282.3 184.3 C282 189, 280.2 194, 276.4 197.7 C272 201.2, 266 204.5, 258 208.5 C254 210.5, 250.5 212.3, 247.9 213.6" />
<path d="M274.6 183.2 C275.6 187, 275.4 191, 273.6 194.5 C271.8 197.5, 269.5 199.6, 266.8 201.3" />
<path d="M269.6 187.1 C270.8 191, 270.5 195, 268.6 198 C267.4 199.6, 266 200.8, 264.3 202" />
<path d="M265.7 196 C266.3 198, 266.3 200.2, 265.4 202.8" />
<path d="M256.8 203.2 C257.4 204.8, 257.6 206.5, 257.2 208.4" />
<path d="M277.6 205.5 C271 207, 265 209, 259.5 211.8 C255 214, 252 216, 250 217.6" />
<path d="M268.6 210.6 C264 212, 259.5 214.2, 255 217.6" />
</g>
<text transform="matrix(0.8732 0 0 0.9725 210.087 282.800)" x="0" y="0" font-family="Liberation Sans" font-weight="bold" font-size="100" fill="#000">P</text><text transform="matrix(0.8732 0 0 0.9725 210.787 282.800)" x="0" y="0" font-family="Liberation Sans" font-weight="bold" font-size="100" fill="#000">P</text><text transform="matrix(0.8732 0 0 0.9725 211.487 282.800)" x="0" y="0" font-family="Liberation Sans" font-weight="bold" font-size="100" fill="#000">P</text><text transform="matrix(0.7757 0 0 0.9718 273.497 282.628)" x="0" y="0" font-family="Liberation Sans" font-weight="bold" font-size="100" fill="#000">O</text><text transform="matrix(0.7757 0 0 0.9718 274.197 282.628)" x="0" y="0" font-family="Liberation Sans" font-weight="bold" font-size="100" fill="#000">O</text><text transform="matrix(0.7757 0 0 0.9718 274.897 282.628)" x="0" y="0" font-family="Liberation Sans" font-weight="bold" font-size="100" fill="#000">O</text><text transform="matrix(0.8984 0 0 0.9710 337.203 283.000)" x="0" y="0" font-family="Liberation Sans" font-weight="bold" font-size="100" fill="#000">Y</text><text transform="matrix(0.8984 0 0 0.9710 337.903 283.000)" x="0" y="0" font-family="Liberation Sans" font-weight="bold" font-size="100" fill="#000">Y</text><text transform="matrix(0.8984 0 0 0.9710 338.603 283.000)" x="0" y="0" font-family="Liberation Sans" font-weight="bold" font-size="100" fill="#000">Y</text><text transform="matrix(0.7786 0 0 0.9718 399.886 282.628)" x="0" y="0" font-family="Liberation Sans" font-weight="bold" font-size="100" fill="#000">O</text><text transform="matrix(0.7786 0 0 0.9718 400.586 282.628)" x="0" y="0" font-family="Liberation Sans" font-weight="bold" font-size="100" fill="#000">O</text><text transform="matrix(0.7786 0 0 0.9718 401.286 282.628)" x="0" y="0" font-family="Liberation Sans" font-weight="bold" font-size="100" fill="#000">O</text><text transform="matrix(0.9102 0 0 0.9725 465.290 282.800)" x="0" y="0" font-family="Liberation Sans" font-weight="bold" font-size="100" fill="#000">T</text><text transform="matrix(0.9102 0 0 0.9725 465.990 282.800)" x="0" y="0" font-family="Liberation Sans" font-weight="bold" font-size="100" fill="#000">T</text><text transform="matrix(0.9102 0 0 0.9725 466.690 282.800)" x="0" y="0" font-family="Liberation Sans" font-weight="bold" font-size="100" fill="#000">T</text>
<g fill="none" stroke="#ffffff" stroke-width="1.7" stroke-linecap="round">
<path d="M265.1 217.6 C262 218.2, 259.5 218.8, 256.8 219.6" />
<path d="M265.7 220.4 C263.5 221, 261.5 221.5, 259.6 222.2" />
</g>
<g clip-path="url(#cnt)" fill="none" stroke="#ffffff" stroke-width="1.7">
<path d="M240.8 226.3 Q245.6 236 244 249" />
<path d="M243.8 226.3 Q248.6 236 247 249" />
<path d="M246.8 226.3 Q251.6 236 250 249" />
<path d="M249.8 227 Q254.6 236 253 249" />
</g>
<g clip-path="url(#cv)">

</g>
<rect x="210.4" y="278" width="314" height="0.7" fill="#bdbdbd"/>
<circle cx="210.6" cy="278.35" r="0.9" fill="#e0e0e0"/>
<rect x="524" y="203.7" width="0.8" height="124" fill="#9a9a9a"/>
<path d="M412.3 245.3 H415.7 M414 245.3 V251.8 M412.3 251.8 H415.7 M413 249 H415" stroke="#ddd" stroke-width="0.7"/>
</svg>
<svg class="a" style="left:0;top:0;mix-blend-mode:screen" width="800" height="450" viewBox="0 0 800 450"><g clip-path="url(#cv)"><rect x="22" y="123.8" width="621" height="1" fill="rgb(40,120,130)"/>
<rect x="22" y="345.8" width="621" height="1" fill="rgb(40,120,130)"/>
<rect x="147.4" y="44" width="1" height="384" fill="rgb(40,120,130)"/>
<rect x="517.2" y="44" width="1" height="384" fill="rgb(40,120,130)"/></g></svg>
<div class="a" style="left:643px;top:24px;width:157px;height:410px;background:#3c3c3c;"></div>
<div class="a" style="left:643px;top:24px;width:9px;height:404px;background:#474747;"></div>
<div class="a" style="left:652px;top:24px;width:148px;height:5.5px;background:#474747;"></div>
<svg class="a" style="left:656.5px;top:25px" width="6" height="3.5" viewBox="0 0 6 3.5"><path d="M0.5 1 H5.5 M0.5 2.5 H5.5" stroke="#aaa" stroke-width="0.6"/></svg>
<svg class="a" style="left:793px;top:25px" width="6" height="3.5" viewBox="0 0 6 3.5"><path d="M0.5 1 H5.5 M0.5 2.5 H5.5" stroke="#aaa" stroke-width="0.6"/></svg>
<div class="a" style="left:651.7px;top:29.5px;width:15.3px;height:404px;background:#535353;"></div>
<div class="a" style="left:652px;top:47px;width:15px;height:0.6px;background:#454545;"></div>
<div class="a" style="left:652px;top:64px;width:15px;height:0.6px;background:#454545;"></div>
<div class="a" style="left:652px;top:92px;width:15px;height:0.6px;background:#454545;"></div>
<div class="a" style="left:652px;top:109px;width:15px;height:0.6px;background:#454545;"></div>
<div class="a" style="left:652px;top:128px;width:15px;height:0.6px;background:#454545;"></div>
<div class="a" style="left:652px;top:159px;width:15px;height:0.6px;background:#454545;"></div>
<div class="a" style="left:652px;top:175px;width:15px;height:0.6px;background:#454545;"></div>
<div class="a" style="left:652px;top:200.5px;width:15px;height:0.6px;background:#454545;"></div>
<div class="a" style="left:652px;top:226px;width:15px;height:0.6px;background:#454545;"></div>
<svg class="a" style="left:655px;top:34.6px" width="8" height="8" viewBox="0 0 8 8"><path d="M2 1 V7 M1 1.5 H3 M1 6.5 H3" stroke="#d4d4d4" stroke-width="0.9"/><path d="M5 1 Q7.5 2 6 4 Q4.5 5.5 6.5 7" stroke="#d4d4d4" stroke-width="0.9" fill="none"/><rect x="1" y="3.5" width="2.2" height="2" fill="#d4d4d4"/></svg>
<svg class="a" style="left:655px;top:51.7px" width="8" height="8" viewBox="0 0 8 8"><path d="M1.5 1 L7 4 L1.5 7 Z" fill="#d4d4d4"/></svg>
<svg class="a" style="left:655px;top:68.8px" width="8" height="8" viewBox="0 0 8 8"><circle cx="4" cy="4" r="2" fill="none" stroke="#d4d4d4" stroke-width="1"/><path d="M4 0.5 V7.5 M0.5 4 H7.5 M1.5 1.5 L6.5 6.5 M6.5 1.5 L1.5 6.5" stroke="#d4d4d4" stroke-width="0.6"/></svg>
<svg class="a" style="left:655px;top:81.0px" width="8" height="8" viewBox="0 0 8 8"><path d="M0.5 6 H7.5 V4.5 L6.5 3 L5.5 4.5 L4 3 L2.5 4.5 L1.5 3 L0.5 4.5 Z" fill="#d4d4d4"/></svg>
<svg class="a" style="left:655px;top:98.0px" width="8" height="8" viewBox="0 0 8 8"><circle cx="4" cy="4" r="3.1" fill="none" stroke="#d4d4d4" stroke-width="0.9"/><path d="M4 3.3 V6" stroke="#d4d4d4" stroke-width="0.9"/><circle cx="4" cy="2.2" r="0.5" fill="#d4d4d4"/></svg>
<svg class="a" style="left:655px;top:115.0px" width="8" height="8" viewBox="0 0 8 8"><rect x="2.5" y="0.5" width="5" height="5" fill="none" stroke="#d4d4d4" stroke-width="0.7"/><path d="M1 7.5 L2.5 2.5 L4 7.5 M1.6 5.6 H3.4" stroke="#d4d4d4" stroke-width="0.8" fill="none"/></svg>
<svg class="a" style="left:655px;top:132.0px" width="8" height="8" viewBox="0 0 8 8"><path d="M3 0.8 H5.5 V3.5 H7.5 V5.5 H1 V3.5 H3 Z M1 6.8 H7.5" stroke="#d4d4d4" stroke-width="0.8" fill="#d4d4d4"/><rect x="0.3" y="0.5" width="2" height="2" fill="none" stroke="#d4d4d4" stroke-width="0.5"/></svg>
<svg class="a" style="left:655px;top:149.0px" width="8" height="8" viewBox="0 0 8 8"><path d="M1 7.3 Q1 5.8 2.4 5.6 L7 1" stroke="#d4d4d4" stroke-width="1.2" fill="none"/><rect x="0.3" y="0.5" width="2" height="2" fill="none" stroke="#d4d4d4" stroke-width="0.5"/></svg>
<svg class="a" style="left:655px;top:161.4px" width="8" height="8" viewBox="0 0 8 8"><path d="M0.5 2 H7.5 M0.5 5.5 H7.5" stroke="#d4d4d4" stroke-width="0.9"/><rect x="4.8" y="0.8" width="1.6" height="2.4" fill="#d4d4d4"/><rect x="1.8" y="4.3" width="1.6" height="2.4" fill="#d4d4d4"/></svg>
<svg class="a" style="left:655px;top:178.4px" width="8" height="8" viewBox="0 0 8 8"><path d="M0.8 7.2 L3 0.8 L5.2 7.2 M1.6 5 H4.4 M6.8 0.8 V7.5" stroke="#d4d4d4" stroke-width="0.8" fill="none"/></svg>
<svg class="a" style="left:655px;top:189.4px" width="8" height="8" viewBox="0 0 8 8"><path d="M4 1 H7 M5.2 1 V7.5 M6.5 1 V7.5" stroke="#d4d4d4" stroke-width="0.7"/><path d="M5 1 Q1.5 1 1.5 3 Q1.5 5 5 5 Z" fill="#d4d4d4"/></svg>
<svg class="a" style="left:655px;top:206.5px" width="8" height="8" viewBox="0 0 8 8"><rect x="1" y="1" width="6" height="6.5" fill="none" stroke="#d4d4d4" stroke-width="0.8"/><path d="M4 1 V4.5 M1 4.5 H7" stroke="#d4d4d4" stroke-width="0.7"/></svg>
<svg class="a" style="left:655px;top:218.7px" width="8" height="8" viewBox="0 0 8 8"><path d="M1 1 H5.5 L7 2.5 V7.5 H1 Z" fill="#d4d4d4"/><path d="M2.3 3.5 H5.7 M2.3 5 H5.7" stroke="#535353" stroke-width="0.5"/></svg>
<div class="a" style="left:668px;top:29.5px;width:130.5px;height:134px;background:#535353;"></div>
<div class="a" style="left:668px;top:29.8px;width:130.5px;height:11.2px;background:#454545;"></div>
<div class="a" style="left:668px;top:29.8px;width:18.3px;height:11.2px;background:#535353;"></div>
<div class="t" style="left:672px;top:33.6px;font-size:4.5px;color:#f0f0f0;font-weight:bold">Color</div>
<div class="t" style="left:689px;top:33.6px;font-size:4.4px;color:#bcbcbc;">Swatches</div>
<div class="t" style="left:714.7px;top:33.6px;font-size:4.4px;color:#bcbcbc;">Gradients</div>
<div class="t" style="left:741px;top:33.6px;font-size:4.4px;color:#bcbcbc;">Patterns</div>
<svg class="a" style="left:791.5px;top:33.4px" width="5" height="4" viewBox="0 0 5 4"><path d="M0.5 0.6 H4.5 M0.5 2 H4.5 M0.5 3.4 H4.5" stroke="#aaa" stroke-width="0.55"/></svg>
<div class="a" style="left:677px;top:50.2px;width:7.5px;height:7.5px;background:#3a2418;border:0.7px solid #b8a8a0"></div>
<div class="a" style="left:672.3px;top:45.6px;width:7.8px;height:7.8px;background:#000;border:0.7px solid #d8d8d8"></div>
<svg class="a" style="left:687px;top:44px" width="89.3" height="110.7" viewBox="0 0 89.3 110.7" preserveAspectRatio="none">
<defs><linearGradient id="gh" x1="0" y1="0" x2="1" y2="0"><stop offset="0" stop-color="#fff"/><stop offset="1" stop-color="#ff6a00"/></linearGradient>
<linearGradient id="gv" x1="0" y1="0" x2="0" y2="1"><stop offset="0" stop-color="#000" stop-opacity="0"/><stop offset="1" stop-color="#000" stop-opacity="1"/></linearGradient></defs>
<rect width="89.3" height="110.7" fill="url(#gh)"/><rect width="89.3" height="110.7" fill="url(#gv)"/>
<circle cx="1" cy="109.5" r="1.8" fill="none" stroke="#ddd" stroke-width="0.6"/>
</svg>
<svg class="a" style="left:782.5px;top:44px" width="9" height="111" viewBox="0 0 9 111" preserveAspectRatio="none">
<defs><linearGradient id="hue" x1="0" y1="0" x2="0" y2="1">
<stop offset="0" stop-color="#f00"/><stop offset="0.17" stop-color="#f0f"/><stop offset="0.33" stop-color="#00f"/><stop offset="0.5" stop-color="#0ff"/><stop offset="0.67" stop-color="#0f0"/><stop offset="0.83" stop-color="#ff0"/><stop offset="1" stop-color="#f00"/></linearGradient></defs>
<rect width="9" height="111" fill="url(#hue)"/></svg>
<svg class="a" style="left:779px;top:144.5px" width="4" height="4" viewBox="0 0 4 4"><path d="M0.5 0.5 L3.5 2 L0.5 3.5 Z" fill="#eee"/></svg>
<div class="a" style="left:668px;top:163px;width:130.5px;height:1px;background:#383838;"></div>
<div class="a" style="left:668px;top:164px;width:130.5px;height:120.4px;background:#535353;"></div>
<div class="a" style="left:668px;top:164px;width:130.5px;height:12.400000000000006px;background:#454545;"></div>
<div class="a" style="left:668px;top:164px;width:27.5px;height:12.400000000000006px;background:#535353;"></div>
<div class="t" style="left:672px;top:168.39999999999998px;font-size:4.5px;color:#f0f0f0;font-weight:bold">Properties</div>
<div class="t" style="left:700px;top:168.39999999999998px;font-size:4.4px;color:#bcbcbc;">Adjustments</div>
<svg class="a" style="left:791.5px;top:168.2px" width="5" height="4" viewBox="0 0 5 4"><path d="M0.5 0.6 H4.5 M0.5 2 H4.5 M0.5 3.4 H4.5" stroke="#aaa" stroke-width="0.55"/></svg>
<div class="a" style="left:673.3px;top:180.7px;width:8px;height:7.3px;background:#1e1e1e;"></div>
<svg class="a" style="left:674.3px;top:181.4px" width="6" height="6" viewBox="0 0 6 6"><path d="M0.9 1.3 V0.8 H5.1 V1.3 M3 0.8 V5.2 M2.1 5.2 H3.9" stroke="#f0f0f0" stroke-width="0.6" fill="none"/></svg>
<div class="t" style="left:684.5px;top:182.2px;font-size:4.3px;color:#c4c4c4;">Type Layer</div>
<div class="a" style="left:668px;top:190px;width:123px;height:0.6px;background:#474747;"></div>
<svg class="a" style="left:670.5px;top:195px" width="4" height="3" viewBox="0 0 4 3"><path d="M0.5 0.8 L2 2.3 L3.5 0.8" stroke="#aaa" stroke-width="0.6" fill="none"/></svg>
<div class="t" style="left:678px;top:195px;font-size:4.4px;color:#d8d8d8;font-weight:bold">Transform</div>
<svg class="a" style="left:747px;top:194.5px" width="5" height="5" viewBox="0 0 5 5"><path d="M1 1.5 A1.8 1.8 0 1 0 2.5 0.7 M0.6 0.4 L1 1.6 L2.2 1.3" stroke="#bbb" stroke-width="0.55" fill="none"/></svg>
<div class="a" style="left:693.7px;top:204.6px;width:20.3px;height:5.6px;background:#4a4a4a;border:0.5px solid #474747"></div>
<div class="t" style="left:687.7px;top:205.79999999999998px;font-size:3.6px;color:#8a8a8a;">W</div>
<div class="t" style="left:695.5px;top:205.79999999999998px;font-size:3.6px;color:#7a7a7a;">00.00 mm</div>
<div class="a" style="left:732px;top:204.6px;width:20.3px;height:5.6px;background:#4a4a4a;border:0.5px solid #474747"></div>
<div class="t" style="left:726px;top:205.79999999999998px;font-size:3.6px;color:#8a8a8a;">H</div>
<div class="t" style="left:733.8px;top:205.79999999999998px;font-size:3.6px;color:#7a7a7a;">00.00 mm</div>
<div class="a" style="left:693.7px;top:214.6px;width:20.3px;height:5.6px;background:#4a4a4a;border:0.5px solid #474747"></div>
<div class="t" style="left:687.7px;top:215.79999999999998px;font-size:3.6px;color:#8a8a8a;">X</div>
<div class="t" style="left:695.5px;top:215.79999999999998px;font-size:3.6px;color:#7a7a7a;">00.00 mm</div>
<div class="a" style="left:732px;top:214.6px;width:20.3px;height:5.6px;background:#4a4a4a;border:0.5px solid #474747"></div>
<div class="t" style="left:726px;top:215.79999999999998px;font-size:3.6px;color:#8a8a8a;">Y</div>
<div class="t" style="left:733.8px;top:215.79999999999998px;font-size:3.6px;color:#7a7a7a;">00.00 mm</div>
<div class="a" style="left:694.5px;top:226px;width:14px;height:5.6px;background:#4a4a4a;"></div>
<div class="t" style="left:695.6px;top:227.2px;font-size:3.6px;color:#7a7a7a;">0.00°</div>
<svg class="a" style="left:685.5px;top:226px" width="5" height="5" viewBox="0 0 5 5"><path d="M0.5 4.5 H4.5 L0.5 0.8 Z" fill="none" stroke="#9a9a9a" stroke-width="0.5"/></svg>
<div class="a" style="left:677px;top:208.5px;width:2.5px;height:6.5px;background:#666;border-radius:1px"></div>
<div class="t" style="left:731px;top:227.2px;font-size:3.6px;color:#9a9a9a;">▯◂</div>
<svg class="a" style="left:745px;top:226px" width="5" height="6" viewBox="0 0 5 6"><path d="M0.5 0.5 H4.5 L2.5 3 L4.5 5.5 H0.5 L2.5 3 Z" fill="#aaa"/></svg>
<div class="a" style="left:792.3px;top:191px;width:4.7px;height:93px;background:#4a4a4a;"></div>
<div class="a" style="left:792.6px;top:197.5px;width:4.1px;height:24px;background:#6a6a6a;border-radius:2px"></div>
<div class="a" style="left:668px;top:238px;width:123px;height:0.6px;background:#4c4c4c;"></div>
<svg class="a" style="left:670.5px;top:244px" width="4" height="3" viewBox="0 0 4 3"><path d="M0.5 0.8 L2 2.3 L3.5 0.8" stroke="#aaa" stroke-width="0.6" fill="none"/></svg>
<div class="t" style="left:678px;top:243.8px;font-size:4.4px;color:#d8d8d8;font-weight:bold">Character</div>
<div class="a" style="left:672.4px;top:253.3px;width:79px;height:5.9px;background:#454545;border:0.5px solid #3c3c3c"></div>
<div class="t" style="left:673.9px;top:254.60000000000002px;font-size:3.9px;color:#c0c0c0;">IRANSansWeb</div>
<svg class="a" style="left:746.9px;top:254.9px" width="3.5" height="3" viewBox="0 0 3.5 3"><path d="M0.4 0.8 L1.75 2.1 L3.1 0.8" stroke="#aaa" stroke-width="0.5" fill="none"/></svg>
<div class="a" style="left:672.4px;top:263px;width:79px;height:6.3px;background:#454545;border:0.5px solid #3c3c3c"></div>
<div class="t" style="left:673.9px;top:264.3px;font-size:3.9px;color:#c0c0c0;">Bold</div>
<svg class="a" style="left:746.9px;top:264.6px" width="3.5" height="3" viewBox="0 0 3.5 3"><path d="M0.4 0.8 L1.75 2.1 L3.1 0.8" stroke="#aaa" stroke-width="0.5" fill="none"/></svg>
<div class="a" style="left:668px;top:284.4px;width:130.5px;height:2px;background:#383838;"></div>
<div class="a" style="left:668px;top:286.5px;width:130.5px;height:147px;background:#535353;"></div>
<div class="a" style="left:668px;top:286.5px;width:130.5px;height:11.0px;background:#454545;"></div>
<div class="a" style="left:668px;top:286.5px;width:19.6px;height:11.0px;background:#535353;"></div>
<div class="t" style="left:672px;top:290.2px;font-size:4.5px;color:#f0f0f0;font-weight:bold">Layers</div>
<div class="t" style="left:691.7px;top:290.2px;font-size:4.4px;color:#bcbcbc;">Channels</div>
<div class="t" style="left:716px;top:290.2px;font-size:4.4px;color:#bcbcbc;">Paths</div>
<svg class="a" style="left:791.5px;top:290.0px" width="5" height="4" viewBox="0 0 5 4"><path d="M0.5 0.6 H4.5 M0.5 2 H4.5 M0.5 3.4 H4.5" stroke="#aaa" stroke-width="0.55"/></svg>
<div class="a" style="left:671.5px;top:302.7px;width:33.5px;height:6.8px;background:#474747;"></div>
<svg class="a" style="left:673px;top:303.8px" width="5" height="5" viewBox="0 0 5 5"><circle cx="2" cy="2" r="1.4" stroke="#aaa" stroke-width="0.55" fill="none"/><path d="M3 3 L4.5 4.5" stroke="#aaa" stroke-width="0.6"/></svg>
<div class="t" style="left:677.5px;top:304.2px;font-size:3.7px;color:#8a8a8a;">Kind</div>
<svg class="a" style="left:711.5px;top:303.2px" width="6" height="6" viewBox="0 0 6 6"><rect x="0.5" y="0.8" width="5" height="4.4" fill="none" stroke="#c4c4c4" stroke-width="0.55"/><path d="M0.5 3.8 L2 2.5 L3.5 4 L5.5 2.5" stroke="#c4c4c4" stroke-width="0.5" fill="none"/></svg>
<svg class="a" style="left:721.3px;top:303.2px" width="6" height="6" viewBox="0 0 6 6"><circle cx="3" cy="3" r="2.2" fill="none" stroke="#c4c4c4" stroke-width="0.55"/><path d="M3 0.8 A2.2 2.2 0 0 1 3 5.2 Z" fill="#c4c4c4"/></svg>
<svg class="a" style="left:731px;top:303.2px" width="6" height="6" viewBox="0 0 6 6"><path d="M0.6 0.8 H5.4 M3 0.8 V5.4 M2 5.4 H4" stroke="#c4c4c4" stroke-width="0.7" fill="none"/></svg>
<svg class="a" style="left:740.8px;top:303.2px" width="6" height="6" viewBox="0 0 6 6"><rect x="0.8" y="0.8" width="4.4" height="4.4" fill="none" stroke="#c4c4c4" stroke-width="0.55"/><rect x="0.3" y="0.3" width="1" height="1" fill="#c4c4c4"/><rect x="4.7" y="4.7" width="1" height="1" fill="#c4c4c4"/></svg>
<svg class="a" style="left:750.5px;top:303.2px" width="6" height="6" viewBox="0 0 6 6"><rect x="0.8" y="1.5" width="4" height="4" fill="none" stroke="#c4c4c4" stroke-width="0.55"/><rect x="2" y="0.5" width="3.5" height="3" fill="#c4c4c4"/></svg>
<svg class="a" style="left:761px;top:300.8px" width="4" height="4" viewBox="0 0 4 4"><circle cx="2" cy="2" r="1.6" fill="#cfcfcf"/><circle cx="2" cy="2" r="0.7" fill="#666"/></svg>
<div class="a" style="left:668px;top:311.5px;width:123px;height:0.5px;background:#4a4a4a;"></div>
<div class="a" style="left:671.3px;top:314.6px;width:51.5px;height:6.5px;background:#454545;border:0.5px solid #3c3c3c"></div>
<div class="t" style="left:672.8px;top:315.90000000000003px;font-size:3.9px;color:#c0c0c0;">Normal</div>
<svg class="a" style="left:718.3px;top:316.20000000000005px" width="3.5" height="3" viewBox="0 0 3.5 3"><path d="M0.4 0.8 L1.75 2.1 L3.1 0.8" stroke="#aaa" stroke-width="0.5" fill="none"/></svg>
<div class="t" style="left:726px;top:316.2px;font-size:3.9px;color:#bdbdbd;">Opacity:</div>
<div class="a" style="left:744.2px;top:314.6px;width:13px;height:6.5px;background:#454545;"></div>
<div class="t" style="left:745.2px;top:316.2px;font-size:3.9px;color:#e0e0e0;">100%</div>
<svg class="a" style="left:758.5px;top:316.3px" width="4" height="3" viewBox="0 0 4 3"><path d="M0.5 0.8 L2 2.2 L3.5 0.8" stroke="#aaa" stroke-width="0.5" fill="none"/></svg>
<div class="a" style="left:668px;top:323.5px;width:123px;height:0.5px;background:#4a4a4a;"></div>
<div class="t" style="left:671px;top:327.6px;font-size:3.8px;color:#8a8a8a;">Lock:</div>
<svg class="a" style="left:683.5px;top:326.6px" width="6" height="6" viewBox="0 0 6 6"><rect x="0.8" y="0.8" width="4.4" height="4.4" fill="none" stroke="#b8b8b8" stroke-width="0.5"/><path d="M1.5 3 H4.5 M3 1.5 V4.5" stroke="#b8b8b8" stroke-width="0.4"/></svg>
<svg class="a" style="left:692px;top:326.6px" width="6" height="6" viewBox="0 0 6 6"><path d="M0.8 5.2 L5.2 0.8" stroke="#b8b8b8" stroke-width="0.8"/></svg>
<svg class="a" style="left:701.3px;top:326.6px" width="6" height="6" viewBox="0 0 6 6"><path d="M3 0.5 V5.5 M0.5 3 H5.5 M2.2 1.3 L3 0.5 L3.8 1.3 M2.2 4.7 L3 5.5 L3.8 4.7" stroke="#b8b8b8" stroke-width="0.5" fill="none"/></svg>
<svg class="a" style="left:710px;top:326.6px" width="6" height="6" viewBox="0 0 6 6"><path d="M1.5 0.5 V4.5 H5.5 M0.5 1.5 H4.5 V5.5" stroke="#b8b8b8" stroke-width="0.55" fill="none"/></svg>
<svg class="a" style="left:719px;top:326.6px" width="6" height="6" viewBox="0 0 6 6"><rect x="1" y="2.7" width="4" height="3" fill="#b8b8b8"/><path d="M1.8 2.7 V1.8 A1.2 1.2 0 0 1 4.2 1.8 V2.7" stroke="#b8b8b8" stroke-width="0.55" fill="none"/></svg>
<div class="t" style="left:733.5px;top:327.6px;font-size:3.8px;color:#9a9a9a;">Fill:</div>
<div class="a" style="left:741.5px;top:326.3px;width:16px;height:6.3px;background:#4a4a4a;"></div>
<div class="t" style="left:743.3px;top:327.7px;font-size:3.8px;color:#6a6a6a;">100%</div>
<svg class="a" style="left:758.5px;top:328.2px" width="4" height="3" viewBox="0 0 4 3"><path d="M0.5 0.8 L2 2.2 L3.5 0.8" stroke="#999" stroke-width="0.5" fill="none"/></svg>
<div class="a" style="left:668px;top:335.5px;width:123.5px;height:13.0px;background:#6a6a6a;"></div>
<div class="a" style="left:668px;top:348.0px;width:123.5px;height:0.5px;background:#494949;"></div>
<svg class="a" style="left:671.2px;top:339.50px" width="7" height="5" viewBox="0 0 7 5"><path d="M0.4 2.5 Q3.5 -0.6 6.6 2.5 Q3.5 5.6 0.4 2.5 Z" fill="none" stroke="#d0d0d0" stroke-width="0.6"/><circle cx="3.5" cy="2.5" r="1.1" fill="#d0d0d0"/></svg>
<div class="a" style="left:681.3px;top:337.2px;width:15.5px;height:9.6px;background:#6a6a6a;border:0.6px dashed #cfcfcf"></div>
<svg class="a" style="left:686px;top:339.00px" width="6" height="6" viewBox="0 0 6 6"><path d="M0.9 1.3 V0.8 H5.1 V1.3 M3 0.8 V5.2 M2.1 5.2 H3.9" stroke="#f0f0f0" stroke-width="0.6" fill="none"/></svg>
<div class="t" style="left:699.2px;top:339.9px;font-size:4.2px;color:#f0f0f0;">Layer 3</div>
<div class="a" style="left:668px;top:348.5px;width:123.5px;height:13.0px;background:#535353;"></div>
<div class="a" style="left:668px;top:361.0px;width:123.5px;height:0.5px;background:#494949;"></div>
<svg class="a" style="left:671.2px;top:352.50px" width="7" height="5" viewBox="0 0 7 5"><path d="M0.4 2.5 Q3.5 -0.6 6.6 2.5 Q3.5 5.6 0.4 2.5 Z" fill="none" stroke="#d0d0d0" stroke-width="0.6"/><circle cx="3.5" cy="2.5" r="1.1" fill="#d0d0d0"/></svg>
<svg class="a" style="left:681.3px;top:350.20px" width="15" height="9.6" viewBox="0 0 15 9.6"><defs><pattern id="ck1" width="4" height="4" patternUnits="userSpaceOnUse"><rect width="4" height="4" fill="#fafafa"/><rect width="2" height="2" fill="#c4c4c4"/><rect x="2" y="2" width="2" height="2" fill="#c4c4c4"/></pattern></defs><rect width="15" height="9.6" fill="url(#ck1)"/></svg>
<div class="t" style="left:699.2px;top:352.9px;font-size:4.2px;color:#d8d8d8;">Layer 2</div>
<div class="a" style="left:668px;top:361.5px;width:123.5px;height:13.0px;background:#535353;"></div>
<div class="a" style="left:668px;top:374.0px;width:123.5px;height:0.5px;background:#494949;"></div>
<svg class="a" style="left:671.2px;top:365.50px" width="7" height="5" viewBox="0 0 7 5"><path d="M0.4 2.5 Q3.5 -0.6 6.6 2.5 Q3.5 5.6 0.4 2.5 Z" fill="none" stroke="#d0d0d0" stroke-width="0.6"/><circle cx="3.5" cy="2.5" r="1.1" fill="#d0d0d0"/></svg>
<svg class="a" style="left:681.3px;top:363.20px" width="15" height="9.6" viewBox="0 0 15 9.6"><defs><pattern id="ck2" width="4" height="4" patternUnits="userSpaceOnUse"><rect width="4" height="4" fill="#fafafa"/><rect width="2" height="2" fill="#c4c4c4"/><rect x="2" y="2" width="2" height="2" fill="#c4c4c4"/></pattern></defs><rect width="15" height="9.6" fill="url(#ck2)"/></svg>
<svg class="a" style="left:681.3px;top:363.20px" width="15" height="9.6" viewBox="0 0 15 9.6"><rect width="15" height="9.6" fill="#fff"/><polygon points="2.5,3 5,3 6.2,5.2 5,7.4 2.5,7.4 1.3,5.2" fill="#111"/><rect x="8.5" y="4" width="4" height="4" fill="none" stroke="#222" stroke-width="0.5" stroke-dasharray="0.8 0.5"/></svg>
<div class="t" style="left:699.2px;top:365.9px;font-size:4.2px;color:#d8d8d8;">Polygon 1</div>
<div class="a" style="left:668px;top:374.5px;width:123.5px;height:13.0px;background:#535353;"></div>
<div class="a" style="left:668px;top:387.0px;width:123.5px;height:0.5px;background:#494949;"></div>
<svg class="a" style="left:671.2px;top:378.50px" width="7" height="5" viewBox="0 0 7 5"><path d="M0.4 2.5 Q3.5 -0.6 6.6 2.5 Q3.5 5.6 0.4 2.5 Z" fill="none" stroke="#d0d0d0" stroke-width="0.6"/><circle cx="3.5" cy="2.5" r="1.1" fill="#d0d0d0"/></svg>
<div class="t" style="left:685.3px;top:378.9px;font-size:4px;color:#bbb;font-style:italic">f</div>
<div class="a" style="left:692px;top:377.7px;width:7px;height:6.6px;background:#f21f4f;border:0.5px solid #444"></div>
<svg class="a" style="left:702.0px;top:377.50px" width="3" height="7" viewBox="0 0 3 7"><rect x="0.5" y="0.5" width="2" height="2.6" rx="0.9" fill="none" stroke="#bbb" stroke-width="0.5"/><rect x="0.5" y="3.9" width="2" height="2.6" rx="0.9" fill="none" stroke="#bbb" stroke-width="0.5"/></svg>
<div class="a" style="left:708px;top:376.2px;width:14px;height:9.6px;background:#fff;"></div>
<div class="t" style="left:725.5px;top:378.9px;font-size:4.2px;color:#d8d8d8;">Color Fill 2</div>
<div class="a" style="left:668px;top:387.5px;width:123.5px;height:13.0px;background:#535353;"></div>
<div class="a" style="left:668px;top:400.0px;width:123.5px;height:0.5px;background:#494949;"></div>
<svg class="a" style="left:671.2px;top:391.50px" width="7" height="5" viewBox="0 0 7 5"><path d="M0.4 2.5 Q3.5 -0.6 6.6 2.5 Q3.5 5.6 0.4 2.5 Z" fill="none" stroke="#d0d0d0" stroke-width="0.6"/><circle cx="3.5" cy="2.5" r="1.1" fill="#d0d0d0"/></svg>
<svg class="a" style="left:681.3px;top:389.20px" width="15" height="9.6" viewBox="0 0 15 9.6"><defs><pattern id="ck4" width="4" height="4" patternUnits="userSpaceOnUse"><rect width="4" height="4" fill="#fafafa"/><rect width="2" height="2" fill="#c4c4c4"/><rect x="2" y="2" width="2" height="2" fill="#c4c4c4"/></pattern></defs><rect width="15" height="9.6" fill="url(#ck4)"/></svg>
<svg class="a" style="left:681.3px;top:389.20px" width="15" height="9.6" viewBox="0 0 15 9.6"><polygon points="0,0 5,0 3.5,4.8 5,9.6 0,9.6" fill="#f21f4f"/></svg>
<div class="t" style="left:699.2px;top:391.9px;font-size:4.2px;color:#d8d8d8;">Layer 1...</div>
<div class="a" style="left:668px;top:400.5px;width:123.5px;height:13.0px;background:#535353;"></div>
<div class="a" style="left:668px;top:413.0px;width:123.5px;height:0.5px;background:#494949;"></div>
<svg class="a" style="left:671.2px;top:404.50px" width="7" height="5" viewBox="0 0 7 5"><path d="M0.4 2.5 Q3.5 -0.6 6.6 2.5 Q3.5 5.6 0.4 2.5 Z" fill="none" stroke="#d0d0d0" stroke-width="0.6"/><circle cx="3.5" cy="2.5" r="1.1" fill="#d0d0d0"/></svg>
<div class="a" style="left:685.5px;top:403.7px;width:7px;height:6.6px;background:#404040;border:0.5px solid #444"></div>
<svg class="a" style="left:695.5px;top:403.50px" width="3" height="7" viewBox="0 0 3 7"><rect x="0.5" y="0.5" width="2" height="2.6" rx="0.9" fill="none" stroke="#bbb" stroke-width="0.5"/><rect x="0.5" y="3.9" width="2" height="2.6" rx="0.9" fill="none" stroke="#bbb" stroke-width="0.5"/></svg>
<div class="a" style="left:701.5px;top:402.2px;width:14px;height:9.6px;background:#fff;"></div>
<div class="t" style="left:719.0px;top:404.9px;font-size:4.2px;color:#d8d8d8;">Color Fill 1</div>
<div class="a" style="left:668px;top:413.5px;width:123.5px;height:13.0px;background:#535353;"></div>
<div class="a" style="left:668px;top:426.0px;width:123.5px;height:0.5px;background:#494949;"></div>
<svg class="a" style="left:671.2px;top:417.50px" width="7" height="5" viewBox="0 0 7 5"><path d="M0.4 2.5 Q3.5 -0.6 6.6 2.5 Q3.5 5.6 0.4 2.5 Z" fill="none" stroke="#d0d0d0" stroke-width="0.6"/><circle cx="3.5" cy="2.5" r="1.1" fill="#d0d0d0"/></svg>
<div class="a" style="left:681.3px;top:415.2px;width:15.5px;height:9.6px;background:#fff;"></div>
<div class="t" style="left:699.2px;top:417.9px;font-size:4.2px;color:#d8d8d8;font-style:italic">Background</div>
<svg class="a" style="left:780px;top:417.20px" width="6" height="6" viewBox="0 0 6 6"><rect x="1" y="2.7" width="4" height="3" fill="none" stroke="#bbb" stroke-width="0.55"/><path d="M1.8 2.7 V1.8 A1.2 1.2 0 0 1 4.2 1.8 V2.7" stroke="#bbb" stroke-width="0.55" fill="none"/></svg>
<div class="a" style="left:792.3px;top:335.5px;width:4.7px;height:90px;background:#4a4a4a;"></div>
<svg class="a" style="left:717px;top:425.5px" width="7" height="7" viewBox="0 0 7 7"><path d="M0.5 3 H6.5 M1.5 2 H5.5 M1.5 4 H5.5" stroke="#9a9a9a" stroke-width="0.5"/></svg>
<svg class="a" style="left:729px;top:425.5px" width="7" height="7" viewBox="0 0 7 7"><text x="0.5" y="5" font-size="5" font-style="italic" fill="#9a9a9a" font-family="Liberation Serif">fx</text></svg>
<svg class="a" style="left:741px;top:425.5px" width="7" height="7" viewBox="0 0 7 7"><rect x="0.5" y="1" width="6" height="4.5" fill="#9a9a9a"/><circle cx="3.5" cy="3.25" r="1.3" fill="#535353"/></svg>
<svg class="a" style="left:753px;top:425.5px" width="7" height="7" viewBox="0 0 7 7"><circle cx="3.5" cy="3.25" r="2.4" fill="none" stroke="#9a9a9a" stroke-width="0.6"/><path d="M3.5 0.85 A2.4 2.4 0 0 1 3.5 5.65 Z" fill="#9a9a9a"/></svg>
<svg class="a" style="left:765px;top:425.5px" width="7" height="7" viewBox="0 0 7 7"><path d="M0.5 1.5 H3 L3.5 2.2 H6.5 V5.5 H0.5 Z" fill="#9a9a9a"/></svg>
<svg class="a" style="left:777px;top:425.5px" width="7" height="7" viewBox="0 0 7 7"><rect x="1" y="0.8" width="5" height="5" fill="none" stroke="#9a9a9a" stroke-width="0.55"/><path d="M3.5 2 V4.6 M2.2 3.3 H4.8" stroke="#9a9a9a" stroke-width="0.5"/></svg>
<svg class="a" style="left:788px;top:425.5px" width="7" height="7" viewBox="0 0 7 7"><rect x="1.3" y="1.8" width="4.4" height="4" fill="#9a9a9a"/><rect x="0.8" y="0.8" width="5.4" height="0.7" fill="#9a9a9a"/></svg>
<div class="a" style="left:797.8px;top:0px;width:2.2px;height:434px;background:#3a3a3a;"></div>
<div class="a" style="left:14px;top:428px;width:629px;height:6px;background:#474747;"></div>
<div class="a" style="left:14px;top:428px;width:629px;height:0.5px;background:#3a3a3a;"></div>
<div class="t" style="left:20.5px;top:429.3px;font-size:3.9px;color:#b8b8b8;">100%</div>
<div class="a" style="left:36px;top:428.5px;width:0.5px;height:5px;background:#3c3c3c;"></div>
<div class="t" style="left:41px;top:429.3px;font-size:3.9px;color:#b0b0b0;">85.01 mm x 55.01 mm (300 ppi)</div>
<div class="t" style="left:107.5px;top:429.2px;font-size:3.9px;color:#999;">&gt;</div>
<div class="a" style="left:0px;top:434px;width:800px;height:16px;background:#17171f;"></div>
<svg class="a" style="left:4.2px;top:439.3px" width="7.5" height="7" viewBox="0 0 7.5 7"><rect x="0" y="0" width="3.4" height="3.1" fill="#fff"/><rect x="3.9" y="0" width="3.6" height="3.1" fill="#fff"/><rect x="0" y="3.6" width="3.4" height="3.4" fill="#fff"/><rect x="3.9" y="3.6" width="3.6" height="3.4" fill="#fff"/></svg>
<svg class="a" style="left:24px;top:439px" width="7.5" height="7.5" viewBox="0 0 7.5 7.5"><rect x="0.8" y="1.5" width="4.4" height="4.5" fill="none" stroke="#ddd" stroke-width="0.8"/><path d="M0 1.5 H6 M0 6 H6" stroke="#ddd" stroke-width="0.8"/><rect x="6.5" y="1" width="0.9" height="2" fill="#ddd"/><rect x="6.5" y="4.5" width="0.9" height="2" fill="#ddd"/></svg>
<svg class="a" style="left:43.5px;top:437.8px" width="10" height="9.5" viewBox="0 0 10 9.5"><rect x="1" y="0.5" width="8" height="5.5" rx="2" fill="#4f8fd8"/><rect x="2" y="5" width="6" height="4" rx="1.5" fill="#e8eef8"/><circle cx="4" cy="3" r="1.5" fill="#9cc4f0"/></svg>
<svg class="a" style="left:64px;top:437.8px" width="11" height="9.5" viewBox="0 0 11 9.5"><ellipse cx="5.5" cy="5" rx="5.2" ry="4.4" fill="#f4f4f4"/><path d="M1 6.5 L3.5 3.5 L5 5 L7 2.5 L10 6" stroke="#111" stroke-width="1" fill="none"/><path d="M1.5 3 Q5.5 -0.5 9.5 3" stroke="#111" stroke-width="0.8" fill="none"/></svg>
<svg class="a" style="left:85px;top:438px" width="10" height="9" viewBox="0 0 10 9"><rect x="1.5" y="0.5" width="8" height="5.5" fill="#3d9ae8"/><rect x="0" y="3" width="5" height="3.5" fill="#7ec0f5"/><path d="M3 6.5 L5 8.5" stroke="#9ac8f0" stroke-width="1"/></svg>
<svg class="a" style="left:105px;top:438px" width="11" height="9" viewBox="0 0 11 9"><path d="M4 0.5 H10 V6 H4 Z" fill="#3590e0"/><path d="M0.5 6.5 H8.5 L7 8.5 H1.5 Z" fill="#cfe4f8"/><path d="M5 1 L3.5 5" stroke="#9ad0ff" stroke-width="1"/></svg>
<svg class="a" style="left:126px;top:438.5px" width="10" height="8.5" viewBox="0 0 10 8.5"><rect x="0" y="0.5" width="10" height="8" fill="#e8c25a"/><rect x="0" y="0" width="4" height="1.5" fill="#d9ad3c"/><rect x="1" y="3" width="8" height="4" fill="#f5dc8a"/><rect x="2" y="4" width="6" height="2" fill="#6fa8c8"/></svg>
<svg class="a" style="left:146.3px;top:437.5px" width="10" height="10" viewBox="0 0 10 10"><path d="M3 2.5 V1.5 Q3 0.5 5 0.5 Q7 0.5 7 1.5 V2.5" stroke="#eee" stroke-width="0.7" fill="none"/><rect x="0.5" y="2.5" width="9" height="7" fill="#f2f2f2"/><rect x="3" y="4" width="1.8" height="1.8" fill="#e85a2a"/><rect x="5.2" y="4" width="1.8" height="1.8" fill="#7cbb2a"/><rect x="3" y="6.2" width="1.8" height="1.8" fill="#2a9ae8"/><rect x="5.2" y="6.2" width="1.8" height="1.8" fill="#f2b82a"/></svg>
<svg class="a" style="left:167px;top:437.5px" width="10" height="10" viewBox="0 0 10 10"><path d="M5 0.5 L9.5 5 L5 9.5 L0.5 5 Z" fill="#ef3a2a"/><path d="M5 2.5 L7.5 5 L5 7.5 L2.5 5 Z" fill="#ff5a3a"/></svg>
<svg class="a" style="left:187.5px;top:437.5px" width="10" height="10" viewBox="0 0 10 10"><path d="M2.5 0.8 L5 2.4 L2.5 4 L0 2.4 Z M7.5 0.8 L10 2.4 L7.5 4 L5 2.4 Z M2.5 4 L5 5.6 L2.5 7.2 L0 5.6 Z M7.5 4 L10 5.6 L7.5 7.2 L5 5.6 Z M2.5 7.8 L5 6.3 L7.5 7.8 L5 9.3 Z" fill="#fff"/></svg>
<svg class="a" style="left:208px;top:437.5px" width="10" height="10" viewBox="0 0 10 10"><circle cx="5" cy="5" r="4.8" fill="#db4437"/><path d="M5 5 L9.6 3.5 A4.8 4.8 0 0 1 3 9.4 Z" fill="#f4c20d"/><path d="M5 5 L3 9.4 A4.8 4.8 0 0 1 0.6 2.8 Z" fill="#0f9d58"/><circle cx="5" cy="5" r="2.1" fill="#fff"/><circle cx="5" cy="5" r="1.6" fill="#4285f4"/></svg>
<svg class="a" style="left:227.5px;top:437.3px" width="11" height="10.5" viewBox="0 0 11 10.5"><circle cx="5.5" cy="5.25" r="5" fill="#1e88d8"/><path d="M1 6 Q2 10 6 10 Q9.5 10 10.5 6.5 Q8 8.5 5.5 7.5 Q3.5 6.5 4 4.5 Z" fill="#47c98a"/><circle cx="6" cy="5" r="2" fill="#0c3b6a"/></svg>
<div class="a" style="left:242.6px;top:434px;width:20.2px;height:16px;background:#2c2c38;"></div>
<div class="a" style="left:242.6px;top:449.2px;width:20.2px;height:0.8px;background:#8ab4e0;"></div>
<svg class="a" style="left:248.8px;top:438.4px" width="9.6" height="8" viewBox="0 0 9.6 8"><rect width="9.6" height="8" rx="1" fill="#0b2138"/><text x="1.8" y="6" font-size="4.6" font-weight="bold" fill="#3aa6f5" font-family="Liberation Sans">Ps</text></svg>
<svg class="a" style="left:269px;top:437.5px" width="10.5" height="9.5" viewBox="0 0 10.5 9.5"><rect width="10.5" height="9.5" rx="1" fill="#4fa320"/><path d="M7.5 2.5 H4 Q2.8 2.5 2.8 3.8 V5.8 Q2.8 7 4 7 H7.5" stroke="#d8f5a0" stroke-width="1.3" fill="none"/></svg>
<svg class="a" style="left:289px;top:437.5px" width="10.5" height="9.5" viewBox="0 0 10.5 9.5"><rect width="10.5" height="9.5" rx="1" fill="#e2623a"/><path d="M7.2 2.8 H4.3 Q3 2.8 3 4 V5.6 Q3 6.8 4.3 6.8 H7.2" stroke="#ffd8c8" stroke-width="1.2" fill="none"/></svg>
<div class="t" style="left:300.5px;top:436.7px;font-size:9.0px;color:#bdbdc4;transform:scaleX(0.917);transform-origin:0 0">Youtube.com/c/PoyotAcademy</div>
<div class="t" style="left:640.5px;top:440.4px;font-size:5.0px;color:#d8d8d8;transform:scaleX(0.9);transform-origin:0 0">Desktop</div>
<div class="a" style="left:662.5px;top:437px;width:2.5px;height:0.6px;background:#bbb;"></div>
<svg class="a" style="left:670.5px;top:436.8px" width="10.5" height="10.5" viewBox="0 0 10.5 10.5"><circle cx="5.25" cy="5.25" r="5" fill="#3a9ae0"/><circle cx="5.25" cy="5.25" r="3.8" fill="#6dbcf0"/><text x="2.8" y="8" font-size="7" font-weight="bold" fill="#0b4a80" font-family="Liberation Sans">?</text></svg>
<svg class="a" style="left:684.5px;top:440px" width="5" height="3.5" viewBox="0 0 5 3.5"><path d="M0.5 3 L2.5 0.8 L4.5 3" stroke="#ddd" stroke-width="0.7" fill="none"/></svg>
<svg class="a" style="left:694px;top:438px" width="5" height="9" viewBox="0 0 5 9"><rect x="1" y="0.5" width="3" height="5" rx="1.5" fill="#eee"/><path d="M2.5 5.5 V8" stroke="#eee" stroke-width="0.7"/></svg>
<svg class="a" style="left:703.3px;top:439px" width="8" height="6" viewBox="0 0 8 6"><rect x="0" y="1.5" width="1.5" height="4" fill="#eee"/><rect x="2.2" y="0.5" width="5.8" height="5" fill="#eee"/></svg>
<svg class="a" style="left:713.8px;top:438.8px" width="7" height="7" viewBox="0 0 7 7"><rect x="0.8" y="0.8" width="5.4" height="4" fill="none" stroke="#ddd" stroke-width="0.7"/><path d="M2 6.5 H5 M3.5 4.8 V6.5" stroke="#ddd" stroke-width="0.7"/></svg>
<svg class="a" style="left:723.3px;top:439px" width="6" height="6" viewBox="0 0 6 6"><path d="M0.5 2 H1.8 L3.5 0.5 V5.5 L1.8 4 H0.5 Z" fill="none" stroke="#ddd" stroke-width="0.6"/><path d="M4.5 1.8 Q5.3 3 4.5 4.2" stroke="#ddd" stroke-width="0.5" fill="none"/></svg>
<div class="t" style="left:735.2px;top:440.3px;font-size:5.2px;color:#e4e4e4;transform:scaleX(0.85);transform-origin:0 0">ENG</div>
<div class="t" style="left:755.5px;top:435.9px;font-size:5.4px;color:#e4e4e4;transform:scaleX(0.8);transform-origin:0 0">15:49</div>
<div class="t" style="left:749px;top:443.8px;font-size:5.4px;color:#e4e4e4;transform:scaleX(0.82);transform-origin:0 0">26/02/2021</div>
<svg class="a" style="left:780.8px;top:438.2px" width="8" height="8" viewBox="0 0 8 8"><path d="M0.5 0.5 H7.5 V5.5 H3.5 L2 7.3 V5.5 H0.5 Z" fill="none" stroke="#e0e0e0" stroke-width="0.7"/></svg>
</body></html>
